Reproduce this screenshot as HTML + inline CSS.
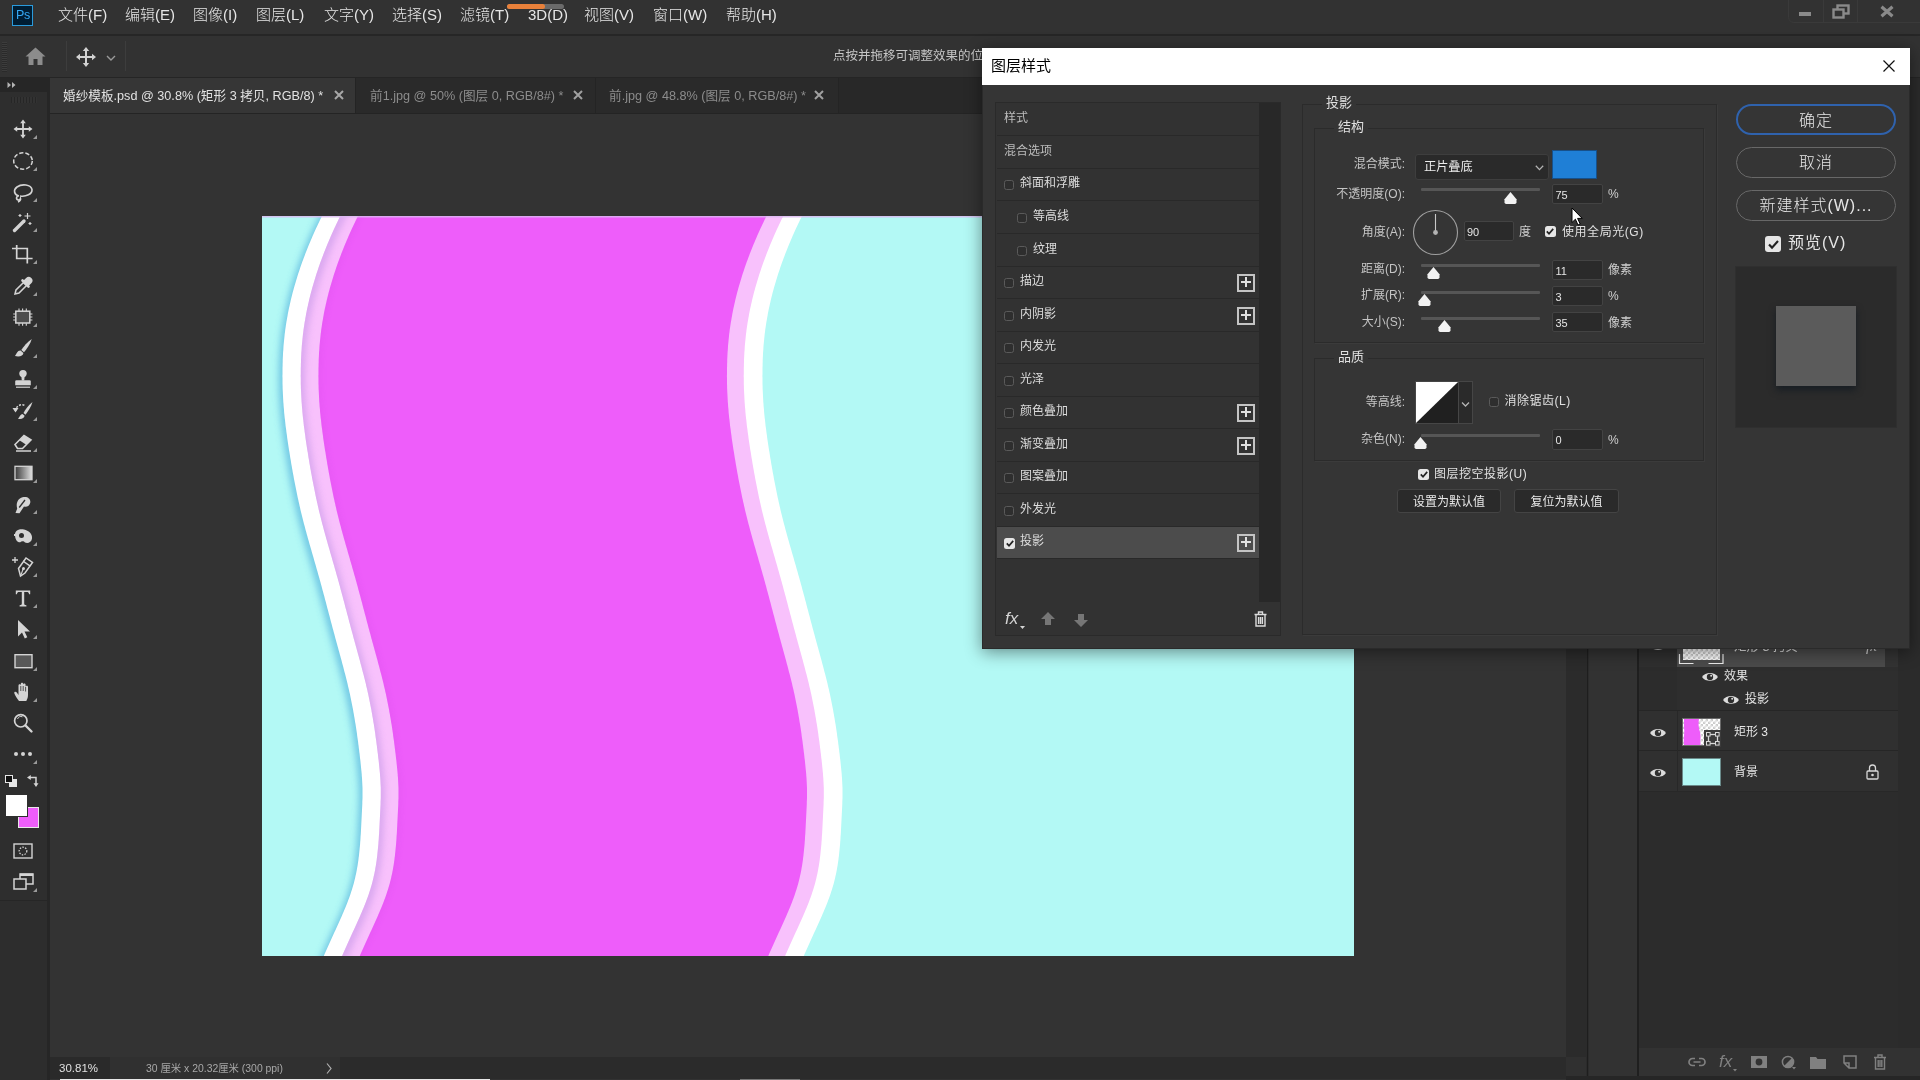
<!DOCTYPE html><html lang="zh"><head><meta charset="utf-8"><title>Photoshop</title><style>
*{box-sizing:border-box;margin:0;padding:0}
html,body{width:1920px;height:1080px;overflow:hidden;background:#323232}
body{font-family:"Liberation Sans","Noto Sans CJK SC",sans-serif;color:#d6d6d6;font-size:12px;position:relative}
.a{position:absolute}
.t{position:absolute;white-space:nowrap;line-height:1}
svg{position:absolute;overflow:visible}
.menu{font-size:15px;color:#e6e6e6;top:7px;font-weight:300}
.tab{font-size:12.65px;top:90px}
.row{position:absolute;left:997px;width:262px;height:32px;border-bottom:1px solid #292929}
.row .lb{position:absolute;top:7px;font-size:12px;color:#dcdcdc;line-height:14px;white-space:nowrap}
.cb{position:absolute;width:10px;height:10px;border:1px solid #5a5a5a;border-radius:2.5px;background:#2e2e2e}
.cbon{position:absolute;width:11px;height:11px;border-radius:2.5px;background:#e6e6e6}
.plus{position:absolute;left:240px;top:7px;width:18px;height:18px;border:2px solid #c4c4c4}
.plus:before{content:"";position:absolute;left:2px;top:5px;width:10px;height:2px;background:#e0e0e0}
.plus:after{content:"";position:absolute;left:6px;top:1px;width:2px;height:10px;background:#e0e0e0}
.lab{position:absolute;font-size:12px;color:#c4c4c4;white-space:nowrap;line-height:14px;text-align:right}
.inp{position:absolute;background:#2a2a2a;border:1px solid #434343;border-radius:2px;color:#e6e6e6;font-size:11px;line-height:20px;padding-left:2.5px}
.trk{position:absolute;height:3px;background:#565656;border-radius:1px}
.grp{position:absolute;border:1px solid #2b2b2b;box-shadow:1px 1px 0 rgba(255,255,255,.03)}
.gt{position:absolute;background:#353535;padding:0 4px;font-size:13px;color:#e0e0e0;line-height:14px;white-space:nowrap}
.btn{position:absolute;border-radius:16px;border:1.5px solid #686868;color:#e6e6e6;font-size:16px;font-weight:300;text-align:center;line-height:30px;letter-spacing:1px}
.sbtn{position:absolute;background:#2a2a2a;border:1px solid #444;border-radius:3px;color:#e8e8e8;font-size:12px;text-align:center;line-height:24px;white-space:nowrap}
</style></head><body><div id="app" style="position:absolute;left:0;top:0;width:1920px;height:1080px;will-change:transform">
<div class="a" style="left:0;top:0;width:1920px;height:34px;background:#323232"></div>
<div class="a" style="left:0;top:34px;width:1920px;height:2px;background:#262626"></div>
<div class="a" style="left:0;top:36px;width:1920px;height:41px;background:#323232"></div>
<div class="a" style="left:0;top:77px;width:1920px;height:1px;background:#252525"></div>
<div class="a" style="left:48px;top:78px;width:1518px;height:36px;background:#282828"></div>
<div class="a" style="left:50px;top:78px;width:788px;height:35px;background:#2a2a2a"></div>
<div class="a" style="left:50px;top:78px;width:305px;height:35px;background:#363636"></div>
<div class="a" style="left:48px;top:113px;width:1518px;height:1px;background:#242424"></div>
<div class="a" style="left:355px;top:78px;width:1px;height:35px;background:#242424"></div>
<div class="a" style="left:595px;top:78px;width:1px;height:35px;background:#242424"></div>
<div class="a" style="left:838px;top:78px;width:1px;height:35px;background:#242424"></div>
<div class="a" style="left:50px;top:114px;width:1516px;height:943px;background:#333333"></div>
<div class="a" style="left:0;top:78px;width:47px;height:1002px;background:#2e2e2e"></div>
<div class="a" style="left:0;top:78px;width:47px;height:14px;background:#262626"></div>
<div class="a" style="left:47px;top:78px;width:3px;height:1002px;background:#262626"></div>
<div class="a" style="left:0;top:900px;width:47px;height:1px;background:#262626"></div>
<div class="a" style="left:0;top:901px;width:47px;height:179px;background:#2d2d2d"></div>
<div class="a" style="left:12px;top:5px;width:21px;height:21px;background:#001d33;border:1.5px solid #2a9bdc"></div>
<div class="t" style="left:16px;top:9px;font-size:12.5px;color:#35a8f5;letter-spacing:-.3px">Ps</div>
<div class="t menu" style="left:58px">文件(F)</div>
<div class="t menu" style="left:125px">编辑(E)</div>
<div class="t menu" style="left:193px">图像(I)</div>
<div class="t menu" style="left:256px">图层(L)</div>
<div class="t menu" style="left:324px">文字(Y)</div>
<div class="t menu" style="left:392px">选择(S)</div>
<div class="t menu" style="left:460px">滤镜(T)</div>
<div class="t menu" style="left:528px">3D(D)</div>
<div class="t menu" style="left:584px">视图(V)</div>
<div class="t menu" style="left:653px">窗口(W)</div>
<div class="t menu" style="left:726px">帮助(H)</div>
<div class="a" style="left:507px;top:4px;width:57px;height:5px;border-radius:3px;background:#6a6a6a"></div>
<div class="a" style="left:507px;top:4px;width:38px;height:5px;border-radius:3px;background:#e8803a"></div>
<div class="a" style="left:1788px;top:-6px;width:140px;height:29px;border:1px solid #3a3a3a;border-radius:6px;background:#323232"></div>
<div class="a" style="left:1823px;top:0;width:1px;height:22px;background:#3a3a3a"></div>
<div class="a" style="left:1857px;top:0;width:1px;height:22px;background:#3a3a3a"></div>
<div class="a" style="left:1799px;top:12px;width:12px;height:4px;background:#8a8a8a"></div>
<svg style="left:1832px;top:4px" width="20" height="16" viewBox="0 0 20 16"><rect x="5.5" y="1.5" width="11" height="8" fill="none" stroke="#8a8a8a" stroke-width="2.4"/><rect x="1.5" y="5.5" width="10" height="8" fill="#323232" stroke="#8a8a8a" stroke-width="2.4"/></svg>
<svg style="left:1880px;top:5px" width="14" height="13" viewBox="0 0 14 13"><path d="M1.5 1.8 L12.5 11.2 M12.5 1.8 L1.5 11.2" stroke="#8a8a8a" stroke-width="3.2" fill="none"/></svg>
<div class="a" style="left:2px;top:42px;width:5px;height:30px;background:repeating-linear-gradient(#3c3c3c 0 1px,#2a2a2a 1px 2px)"></div>
<svg style="left:25px;top:47px" width="21" height="19" viewBox="0 0 21 19"><path d="M10.5 0.5 L20.5 9.5 H17.5 V18 H12.5 V12 H8.5 V18 H3.5 V9.5 H0.5 Z" fill="#8c8c8c"/></svg>
<div class="a" style="left:66px;top:41px;width:1px;height:30px;background:#3d3d3d"></div>
<svg style="left:76px;top:47px" width="20" height="20" viewBox="0 0 20 20"><path d="M10 0 L13.2 4 H11 V9 H16 V6.8 L20 10 L16 13.2 V11 H11 V16 H13.2 L10 20 L6.8 16 H9 V11 H4 V13.2 L0 10 L4 6.8 V9 H9 V4 H6.8 Z" fill="#d2d2d2"/></svg>
<svg style="left:106px;top:55px" width="10" height="6" viewBox="0 0 10 6"><path d="M1 1 L5 5 L9 1" stroke="#9a9a9a" stroke-width="1.4" fill="none"/></svg>
<div class="a" style="left:125px;top:41px;width:1px;height:30px;background:#3d3d3d"></div>
<div class="t" style="left:833px;top:50px;font-size:12.5px;color:#c6c6c6">点按并拖移可调整效果的位置。</div>
<div class="t tab" style="left:63px;color:#e2e2e2">婚纱模板.psd @ 30.8% (矩形 3 拷贝, RGB/8) *</div>
<div class="t tab" style="left:370px;color:#8c8c8c">前1.jpg @ 50% (图层 0, RGB/8#) *</div>
<div class="t tab" style="left:609px;color:#8c8c8c">前.jpg @ 48.8% (图层 0, RGB/8#) *</div>
<svg style="left:334px;top:90px" width="10" height="10" viewBox="0 0 10 10"><path d="M1 1 L9 9 M9 1 L1 9" stroke="#a8a8a8" stroke-width="2" fill="none"/></svg>
<svg style="left:573px;top:90px" width="10" height="10" viewBox="0 0 10 10"><path d="M1 1 L9 9 M9 1 L1 9" stroke="#a0a0a0" stroke-width="2" fill="none"/></svg>
<svg style="left:814px;top:90px" width="10" height="10" viewBox="0 0 10 10"><path d="M1 1 L9 9 M9 1 L1 9" stroke="#a0a0a0" stroke-width="2" fill="none"/></svg>
<svg style="left:7px;top:82px" width="9" height="6" viewBox="0 0 9 6"><path d="M0.5 0 L4 3 L0.5 6 Z M5 0 L8.5 3 L5 6 Z" fill="#b4b4b4"/></svg>
<div class="a" style="left:11px;top:97px;width:26px;height:6px;background:repeating-linear-gradient(90deg,#262626 0 1px,#323232 1px 3px)"></div>
<svg style="left:262px;top:216px;overflow:hidden" width="1092" height="740" viewBox="262 216 1092 740">
<defs>
<filter id="b1" x="-20%" y="-5%" width="140%" height="110%"><feGaussianBlur stdDeviation="3.6"/></filter>
<filter id="b2" x="-20%" y="-5%" width="140%" height="110%"><feGaussianBlur stdDeviation="3.2"/></filter>
<clipPath id="cpP"><path d="M350.8 196 L349.7 198 L348.6 200 L347.5 202 L346.5 204 L345.4 206 L344.4 208 L343.3 210 L342.3 212 L341.3 214 L340.3 216 L339.3 218 L338.3 220 L337.4 222 L336.4 224 L335.5 226 L334.5 228 L333.6 230 L332.7 232 L331.8 234 L330.9 236 L330.1 238 L329.2 240 L328.4 242 L327.5 244 L326.7 246 L325.9 248 L325.1 250 L324.3 252 L323.5 254 L322.8 256 L322.0 258 L321.3 260 L320.5 262 L319.8 264 L319.1 266 L318.4 268 L317.8 270 L317.1 272 L316.4 274 L315.8 276 L315.2 278 L314.6 280 L314.0 282 L313.4 284 L312.8 286 L312.2 288 L311.7 290 L311.1 292 L310.6 294 L310.1 296 L309.6 298 L309.1 300 L308.7 302 L308.2 304 L307.8 306 L307.3 308 L306.9 310 L306.5 312 L306.1 314 L305.8 316 L305.4 318 L305.1 320 L304.7 322 L304.4 324 L304.1 326 L303.8 328 L303.5 330 L303.3 332 L303.0 334 L302.8 336 L302.6 338 L302.4 340 L302.2 342 L302.0 344 L301.8 346 L301.7 348 L301.6 350 L301.4 352 L301.3 354 L301.2 356 L301.1 358 L301.0 360 L301.0 362 L300.9 364 L300.9 366 L300.8 368 L300.8 370 L300.8 372 L300.8 374 L300.7 376 L300.8 378 L300.8 380 L300.8 382 L300.8 384 L300.9 386 L300.9 388 L301.0 390 L301.1 392 L301.2 394 L301.3 396 L301.4 398 L301.5 400 L301.6 402 L301.8 404 L301.9 406 L302.1 408 L302.3 410 L302.4 412 L302.6 414 L302.8 416 L303.0 418 L303.3 420 L303.5 422 L303.7 424 L303.9 426 L304.2 428 L304.5 430 L304.7 432 L305.0 434 L305.3 436 L305.5 438 L305.8 440 L306.1 442 L306.4 444 L306.7 446 L307.0 448 L307.3 450 L307.7 452 L308.0 454 L308.3 456 L308.6 458 L309.0 460 L309.3 462 L309.6 464 L310.0 466 L310.3 468 L310.7 470 L311.0 472 L311.4 474 L311.8 476 L312.1 478 L312.5 480 L312.9 482 L313.3 484 L313.7 486 L314.1 488 L314.5 490 L314.9 492 L315.3 494 L315.7 496 L316.1 498 L316.6 500 L317.0 502 L317.5 504 L317.9 506 L318.4 508 L318.8 510 L319.3 512 L319.8 514 L320.3 516 L320.8 518 L321.3 520 L321.8 522 L322.3 524 L322.9 526 L323.4 528 L323.9 530 L324.5 532 L325.0 534 L325.6 536 L326.1 538 L326.7 540 L327.3 542 L327.8 544 L328.4 546 L329.0 548 L329.6 550 L330.1 552 L330.7 554 L331.3 556 L331.9 558 L332.4 560 L333.0 562 L333.6 564 L334.2 566 L334.7 568 L335.3 570 L335.9 572 L336.4 574 L337.0 576 L337.6 578 L338.1 580 L338.7 582 L339.2 584 L339.8 586 L340.3 588 L340.8 590 L341.4 592 L341.9 594 L342.5 596 L343.0 598 L343.5 600 L344.1 602 L344.6 604 L345.1 606 L345.6 608 L346.2 610 L346.7 612 L347.2 614 L347.8 616 L348.3 618 L348.8 620 L349.3 622 L349.9 624 L350.4 626 L350.9 628 L351.5 630 L352.0 632 L352.6 634 L353.1 636 L353.6 638 L354.2 640 L354.7 642 L355.3 644 L355.8 646 L356.4 648 L356.9 650 L357.5 652 L358.0 654 L358.6 656 L359.1 658 L359.7 660 L360.2 662 L360.7 664 L361.3 666 L361.8 668 L362.3 670 L362.8 672 L363.4 674 L363.9 676 L364.4 678 L364.9 680 L365.4 682 L365.9 684 L366.3 686 L366.8 688 L367.3 690 L367.7 692 L368.2 694 L368.6 696 L369.0 698 L369.4 700 L369.8 702 L370.2 704 L370.6 706 L371.0 708 L371.4 710 L371.7 712 L372.1 714 L372.4 716 L372.8 718 L373.1 720 L373.4 722 L373.8 724 L374.1 726 L374.4 728 L374.7 730 L375.0 732 L375.3 734 L375.5 736 L375.8 738 L376.1 740 L376.4 742 L376.6 744 L376.9 746 L377.1 748 L377.4 750 L377.6 752 L377.9 754 L378.1 756 L378.3 758 L378.6 760 L378.8 762 L379.0 764 L379.2 766 L379.4 768 L379.6 770 L379.8 772 L380.0 774 L380.1 776 L380.3 778 L380.4 780 L380.5 782 L380.6 784 L380.7 786 L380.8 788 L380.8 790 L380.8 792 L380.8 794 L380.8 796 L380.8 798 L380.7 800 L380.6 802 L380.6 804 L380.5 806 L380.4 808 L380.3 810 L380.2 812 L380.1 814 L380.0 816 L379.9 818 L379.8 820 L379.7 822 L379.6 824 L379.5 826 L379.4 828 L379.3 830 L379.2 832 L379.1 834 L378.9 836 L378.8 838 L378.7 840 L378.5 842 L378.4 844 L378.2 846 L378.0 848 L377.8 850 L377.6 852 L377.4 854 L377.2 856 L376.9 858 L376.7 860 L376.4 862 L376.1 864 L375.8 866 L375.4 868 L375.1 870 L374.7 872 L374.3 874 L373.8 876 L373.4 878 L372.9 880 L372.4 882 L371.9 884 L371.3 886 L370.7 888 L370.1 890 L369.4 892 L368.8 894 L368.1 896 L367.4 898 L366.6 900 L365.9 902 L365.1 904 L364.3 906 L363.5 908 L362.6 910 L361.8 912 L360.9 914 L360.1 916 L359.2 918 L358.3 920 L357.4 922 L356.5 924 L355.6 926 L354.7 928 L353.8 930 L352.8 932 L351.9 934 L351.0 936 L350.1 938 L349.2 940 L348.3 942 L347.4 944 L346.5 946 L345.6 948 L344.7 950 L343.8 952 L342.9 954 L342.1 956 L341.3 958 L340.4 960 L339.6 962 L338.9 964 L338.1 966 L337.4 968 L336.6 970 L335.9 972 L335.3 974 L334.6 976 L334.0 978 L777.0 978 L777.6 976 L778.3 974 L778.9 972 L779.6 970 L780.4 968 L781.1 966 L781.9 964 L782.6 962 L783.4 960 L784.3 958 L785.1 956 L785.9 954 L786.8 952 L787.7 950 L788.6 948 L789.5 946 L790.4 944 L791.3 942 L792.2 940 L793.1 938 L794.0 936 L794.9 934 L795.8 932 L796.8 930 L797.7 928 L798.6 926 L799.5 924 L800.4 922 L801.3 920 L802.2 918 L803.1 916 L803.9 914 L804.8 912 L805.6 910 L806.5 908 L807.3 906 L808.1 904 L808.9 902 L809.6 900 L810.4 898 L811.1 896 L811.8 894 L812.4 892 L813.1 890 L813.7 888 L814.3 886 L814.9 884 L815.4 882 L815.9 880 L816.4 878 L816.8 876 L817.3 874 L817.7 872 L818.1 870 L818.4 868 L818.8 866 L819.1 864 L819.4 862 L819.7 860 L819.9 858 L820.2 856 L820.4 854 L820.6 852 L820.8 850 L821.0 848 L821.2 846 L821.4 844 L821.5 842 L821.7 840 L821.8 838 L821.9 836 L822.1 834 L822.2 832 L822.3 830 L822.4 828 L822.5 826 L822.6 824 L822.7 822 L822.8 820 L822.9 818 L823.0 816 L823.1 814 L823.2 812 L823.3 810 L823.4 808 L823.5 806 L823.6 804 L823.6 802 L823.7 800 L823.8 798 L823.8 796 L823.8 794 L823.8 792 L823.8 790 L823.8 788 L823.7 786 L823.6 784 L823.5 782 L823.4 780 L823.3 778 L823.1 776 L823.0 774 L822.8 772 L822.6 770 L822.4 768 L822.2 766 L822.0 764 L821.8 762 L821.6 760 L821.3 758 L821.1 756 L820.9 754 L820.6 752 L820.4 750 L820.1 748 L819.9 746 L819.6 744 L819.4 742 L819.1 740 L818.8 738 L818.5 736 L818.3 734 L818.0 732 L817.7 730 L817.4 728 L817.1 726 L816.8 724 L816.4 722 L816.1 720 L815.8 718 L815.4 716 L815.1 714 L814.7 712 L814.4 710 L814.0 708 L813.6 706 L813.2 704 L812.8 702 L812.4 700 L812.0 698 L811.6 696 L811.2 694 L810.7 692 L810.3 690 L809.8 688 L809.3 686 L808.9 684 L808.4 682 L807.9 680 L807.4 678 L806.9 676 L806.4 674 L805.8 672 L805.3 670 L804.8 668 L804.3 666 L803.7 664 L803.2 662 L802.7 660 L802.1 658 L801.6 656 L801.0 654 L800.5 652 L799.9 650 L799.4 648 L798.8 646 L798.3 644 L797.7 642 L797.2 640 L796.6 638 L796.1 636 L795.6 634 L795.0 632 L794.5 630 L793.9 628 L793.4 626 L792.9 624 L792.3 622 L791.8 620 L791.3 618 L790.8 616 L790.2 614 L789.7 612 L789.2 610 L788.6 608 L788.1 606 L787.6 604 L787.1 602 L786.5 600 L786.0 598 L785.5 596 L784.9 594 L784.4 592 L783.8 590 L783.3 588 L782.8 586 L782.2 584 L781.7 582 L781.1 580 L780.6 578 L780.0 576 L779.4 574 L778.9 572 L778.3 570 L777.7 568 L777.2 566 L776.6 564 L776.0 562 L775.4 560 L774.9 558 L774.3 556 L773.7 554 L773.1 552 L772.6 550 L772.0 548 L771.4 546 L770.8 544 L770.3 542 L769.7 540 L769.1 538 L768.6 536 L768.0 534 L767.5 532 L766.9 530 L766.4 528 L765.9 526 L765.3 524 L764.8 522 L764.3 520 L763.8 518 L763.3 516 L762.8 514 L762.3 512 L761.8 510 L761.4 508 L760.9 506 L760.5 504 L760.0 502 L759.6 500 L759.1 498 L758.7 496 L758.3 494 L757.9 492 L757.5 490 L757.1 488 L756.7 486 L756.3 484 L755.9 482 L755.5 480 L755.1 478 L754.8 476 L754.4 474 L754.0 472 L753.7 470 L753.3 468 L753.0 466 L752.6 464 L752.3 462 L752.0 460 L751.6 458 L751.3 456 L751.0 454 L750.7 452 L750.3 450 L750.0 448 L749.7 446 L749.4 444 L749.1 442 L748.8 440 L748.5 438 L748.3 436 L748.0 434 L747.7 432 L747.5 430 L747.2 428 L746.9 426 L746.7 424 L746.5 422 L746.3 420 L746.0 418 L745.8 416 L745.6 414 L745.4 412 L745.3 410 L745.1 408 L744.9 406 L744.8 404 L744.6 402 L744.5 400 L744.4 398 L744.3 396 L744.2 394 L744.1 392 L744.0 390 L743.9 388 L743.9 386 L743.8 384 L743.8 382 L743.8 380 L743.8 378 L743.7 376 L743.8 374 L743.8 372 L743.8 370 L743.8 368 L743.9 366 L743.9 364 L744.0 362 L744.0 360 L744.1 358 L744.2 356 L744.3 354 L744.4 352 L744.6 350 L744.7 348 L744.8 346 L745.0 344 L745.2 342 L745.4 340 L745.6 338 L745.8 336 L746.0 334 L746.3 332 L746.5 330 L746.8 328 L747.1 326 L747.4 324 L747.7 322 L748.1 320 L748.4 318 L748.8 316 L749.1 314 L749.5 312 L749.9 310 L750.3 308 L750.8 306 L751.2 304 L751.7 302 L752.1 300 L752.6 298 L753.1 296 L753.6 294 L754.1 292 L754.7 290 L755.2 288 L755.8 286 L756.4 284 L757.0 282 L757.6 280 L758.2 278 L758.8 276 L759.4 274 L760.1 272 L760.8 270 L761.4 268 L762.1 266 L762.8 264 L763.5 262 L764.3 260 L765.0 258 L765.8 256 L766.5 254 L767.3 252 L768.1 250 L768.9 248 L769.7 246 L770.5 244 L771.4 242 L772.2 240 L773.1 238 L773.9 236 L774.8 234 L775.7 232 L776.6 230 L777.5 228 L778.5 226 L779.4 224 L780.4 222 L781.3 220 L782.3 218 L783.3 216 L784.3 214 L785.3 212 L786.3 210 L787.4 208 L788.4 206 L789.5 204 L790.5 202 L791.6 200 L792.7 198 L793.8 196Z"/></clipPath>
<clipPath id="cpM"><path d="M368.5 196 L367.4 198 L366.3 200 L365.2 202 L364.2 204 L363.1 206 L362.1 208 L361.0 210 L360.0 212 L359.0 214 L358.0 216 L357.0 218 L356.0 220 L355.1 222 L354.1 224 L353.2 226 L352.2 228 L351.3 230 L350.4 232 L349.5 234 L348.6 236 L347.8 238 L346.9 240 L346.1 242 L345.2 244 L344.4 246 L343.6 248 L342.8 250 L342.0 252 L341.2 254 L340.5 256 L339.7 258 L339.0 260 L338.2 262 L337.5 264 L336.8 266 L336.1 268 L335.5 270 L334.8 272 L334.1 274 L333.5 276 L332.9 278 L332.3 280 L331.7 282 L331.1 284 L330.5 286 L329.9 288 L329.4 290 L328.8 292 L328.3 294 L327.8 296 L327.3 298 L326.8 300 L326.4 302 L325.9 304 L325.5 306 L325.0 308 L324.6 310 L324.2 312 L323.8 314 L323.5 316 L323.1 318 L322.8 320 L322.4 322 L322.1 324 L321.8 326 L321.5 328 L321.2 330 L321.0 332 L320.7 334 L320.5 336 L320.3 338 L320.1 340 L319.9 342 L319.7 344 L319.5 346 L319.4 348 L319.3 350 L319.1 352 L319.0 354 L318.9 356 L318.8 358 L318.7 360 L318.7 362 L318.6 364 L318.6 366 L318.5 368 L318.5 370 L318.5 372 L318.5 374 L318.4 376 L318.5 378 L318.5 380 L318.5 382 L318.5 384 L318.6 386 L318.6 388 L318.7 390 L318.8 392 L318.9 394 L319.0 396 L319.1 398 L319.2 400 L319.3 402 L319.5 404 L319.6 406 L319.8 408 L320.0 410 L320.1 412 L320.3 414 L320.5 416 L320.7 418 L321.0 420 L321.2 422 L321.4 424 L321.6 426 L321.9 428 L322.2 430 L322.4 432 L322.7 434 L323.0 436 L323.2 438 L323.5 440 L323.8 442 L324.1 444 L324.4 446 L324.7 448 L325.0 450 L325.4 452 L325.7 454 L326.0 456 L326.3 458 L326.7 460 L327.0 462 L327.3 464 L327.7 466 L328.0 468 L328.4 470 L328.7 472 L329.1 474 L329.5 476 L329.8 478 L330.2 480 L330.6 482 L331.0 484 L331.4 486 L331.8 488 L332.2 490 L332.6 492 L333.0 494 L333.4 496 L333.8 498 L334.3 500 L334.7 502 L335.2 504 L335.6 506 L336.1 508 L336.5 510 L337.0 512 L337.5 514 L338.0 516 L338.5 518 L339.0 520 L339.5 522 L340.0 524 L340.6 526 L341.1 528 L341.6 530 L342.2 532 L342.7 534 L343.3 536 L343.8 538 L344.4 540 L345.0 542 L345.5 544 L346.1 546 L346.7 548 L347.3 550 L347.8 552 L348.4 554 L349.0 556 L349.6 558 L350.1 560 L350.7 562 L351.3 564 L351.9 566 L352.4 568 L353.0 570 L353.6 572 L354.1 574 L354.7 576 L355.3 578 L355.8 580 L356.4 582 L356.9 584 L357.5 586 L358.0 588 L358.5 590 L359.1 592 L359.6 594 L360.2 596 L360.7 598 L361.2 600 L361.8 602 L362.3 604 L362.8 606 L363.3 608 L363.9 610 L364.4 612 L364.9 614 L365.5 616 L366.0 618 L366.5 620 L367.0 622 L367.6 624 L368.1 626 L368.6 628 L369.2 630 L369.7 632 L370.3 634 L370.8 636 L371.3 638 L371.9 640 L372.4 642 L373.0 644 L373.5 646 L374.1 648 L374.6 650 L375.2 652 L375.7 654 L376.3 656 L376.8 658 L377.4 660 L377.9 662 L378.4 664 L379.0 666 L379.5 668 L380.0 670 L380.5 672 L381.1 674 L381.6 676 L382.1 678 L382.6 680 L383.1 682 L383.6 684 L384.0 686 L384.5 688 L385.0 690 L385.4 692 L385.9 694 L386.3 696 L386.7 698 L387.1 700 L387.5 702 L387.9 704 L388.3 706 L388.7 708 L389.1 710 L389.4 712 L389.8 714 L390.1 716 L390.5 718 L390.8 720 L391.1 722 L391.5 724 L391.8 726 L392.1 728 L392.4 730 L392.7 732 L393.0 734 L393.2 736 L393.5 738 L393.8 740 L394.1 742 L394.3 744 L394.6 746 L394.8 748 L395.1 750 L395.3 752 L395.6 754 L395.8 756 L396.0 758 L396.3 760 L396.5 762 L396.7 764 L396.9 766 L397.1 768 L397.3 770 L397.5 772 L397.7 774 L397.8 776 L398.0 778 L398.1 780 L398.2 782 L398.3 784 L398.4 786 L398.5 788 L398.5 790 L398.5 792 L398.5 794 L398.5 796 L398.5 798 L398.4 800 L398.3 802 L398.3 804 L398.2 806 L398.1 808 L398.0 810 L397.9 812 L397.8 814 L397.7 816 L397.6 818 L397.5 820 L397.4 822 L397.3 824 L397.2 826 L397.1 828 L397.0 830 L396.9 832 L396.8 834 L396.6 836 L396.5 838 L396.4 840 L396.2 842 L396.1 844 L395.9 846 L395.7 848 L395.5 850 L395.3 852 L395.1 854 L394.9 856 L394.6 858 L394.4 860 L394.1 862 L393.8 864 L393.5 866 L393.1 868 L392.8 870 L392.4 872 L392.0 874 L391.5 876 L391.1 878 L390.6 880 L390.1 882 L389.6 884 L389.0 886 L388.4 888 L387.8 890 L387.1 892 L386.5 894 L385.8 896 L385.1 898 L384.3 900 L383.6 902 L382.8 904 L382.0 906 L381.2 908 L380.3 910 L379.5 912 L378.6 914 L377.8 916 L376.9 918 L376.0 920 L375.1 922 L374.2 924 L373.3 926 L372.4 928 L371.5 930 L370.5 932 L369.6 934 L368.7 936 L367.8 938 L366.9 940 L366.0 942 L365.1 944 L364.2 946 L363.3 948 L362.4 950 L361.5 952 L360.6 954 L359.8 956 L359.0 958 L358.1 960 L357.3 962 L356.6 964 L355.8 966 L355.1 968 L354.3 970 L353.6 972 L353.0 974 L352.3 976 L351.7 978 L760.2 978 L760.8 976 L761.5 974 L762.1 972 L762.8 970 L763.6 968 L764.3 966 L765.1 964 L765.8 962 L766.6 960 L767.5 958 L768.3 956 L769.1 954 L770.0 952 L770.9 950 L771.8 948 L772.7 946 L773.6 944 L774.5 942 L775.4 940 L776.3 938 L777.2 936 L778.1 934 L779.0 932 L780.0 930 L780.9 928 L781.8 926 L782.7 924 L783.6 922 L784.5 920 L785.4 918 L786.3 916 L787.1 914 L788.0 912 L788.8 910 L789.7 908 L790.5 906 L791.3 904 L792.1 902 L792.8 900 L793.6 898 L794.3 896 L795.0 894 L795.6 892 L796.3 890 L796.9 888 L797.5 886 L798.1 884 L798.6 882 L799.1 880 L799.6 878 L800.0 876 L800.5 874 L800.9 872 L801.3 870 L801.6 868 L802.0 866 L802.3 864 L802.6 862 L802.9 860 L803.1 858 L803.4 856 L803.6 854 L803.8 852 L804.0 850 L804.2 848 L804.4 846 L804.6 844 L804.7 842 L804.9 840 L805.0 838 L805.1 836 L805.3 834 L805.4 832 L805.5 830 L805.6 828 L805.7 826 L805.8 824 L805.9 822 L806.0 820 L806.1 818 L806.2 816 L806.3 814 L806.4 812 L806.5 810 L806.6 808 L806.7 806 L806.8 804 L806.8 802 L806.9 800 L807.0 798 L807.0 796 L807.0 794 L807.0 792 L807.0 790 L807.0 788 L806.9 786 L806.8 784 L806.7 782 L806.6 780 L806.5 778 L806.3 776 L806.2 774 L806.0 772 L805.8 770 L805.6 768 L805.4 766 L805.2 764 L805.0 762 L804.8 760 L804.5 758 L804.3 756 L804.1 754 L803.8 752 L803.6 750 L803.3 748 L803.1 746 L802.8 744 L802.6 742 L802.3 740 L802.0 738 L801.7 736 L801.5 734 L801.2 732 L800.9 730 L800.6 728 L800.3 726 L800.0 724 L799.6 722 L799.3 720 L799.0 718 L798.6 716 L798.3 714 L797.9 712 L797.6 710 L797.2 708 L796.8 706 L796.4 704 L796.0 702 L795.6 700 L795.2 698 L794.8 696 L794.4 694 L793.9 692 L793.5 690 L793.0 688 L792.5 686 L792.1 684 L791.6 682 L791.1 680 L790.6 678 L790.1 676 L789.6 674 L789.0 672 L788.5 670 L788.0 668 L787.5 666 L786.9 664 L786.4 662 L785.9 660 L785.3 658 L784.8 656 L784.2 654 L783.7 652 L783.1 650 L782.6 648 L782.0 646 L781.5 644 L780.9 642 L780.4 640 L779.8 638 L779.3 636 L778.8 634 L778.2 632 L777.7 630 L777.1 628 L776.6 626 L776.1 624 L775.5 622 L775.0 620 L774.5 618 L774.0 616 L773.4 614 L772.9 612 L772.4 610 L771.8 608 L771.3 606 L770.8 604 L770.3 602 L769.7 600 L769.2 598 L768.7 596 L768.1 594 L767.6 592 L767.0 590 L766.5 588 L766.0 586 L765.4 584 L764.9 582 L764.3 580 L763.8 578 L763.2 576 L762.6 574 L762.1 572 L761.5 570 L760.9 568 L760.4 566 L759.8 564 L759.2 562 L758.6 560 L758.1 558 L757.5 556 L756.9 554 L756.3 552 L755.8 550 L755.2 548 L754.6 546 L754.0 544 L753.5 542 L752.9 540 L752.3 538 L751.8 536 L751.2 534 L750.7 532 L750.1 530 L749.6 528 L749.1 526 L748.5 524 L748.0 522 L747.5 520 L747.0 518 L746.5 516 L746.0 514 L745.5 512 L745.0 510 L744.6 508 L744.1 506 L743.7 504 L743.2 502 L742.8 500 L742.3 498 L741.9 496 L741.5 494 L741.1 492 L740.7 490 L740.3 488 L739.9 486 L739.5 484 L739.1 482 L738.7 480 L738.3 478 L738.0 476 L737.6 474 L737.2 472 L736.9 470 L736.5 468 L736.2 466 L735.8 464 L735.5 462 L735.2 460 L734.8 458 L734.5 456 L734.2 454 L733.9 452 L733.5 450 L733.2 448 L732.9 446 L732.6 444 L732.3 442 L732.0 440 L731.7 438 L731.5 436 L731.2 434 L730.9 432 L730.7 430 L730.4 428 L730.1 426 L729.9 424 L729.7 422 L729.5 420 L729.2 418 L729.0 416 L728.8 414 L728.6 412 L728.5 410 L728.3 408 L728.1 406 L728.0 404 L727.8 402 L727.7 400 L727.6 398 L727.5 396 L727.4 394 L727.3 392 L727.2 390 L727.1 388 L727.1 386 L727.0 384 L727.0 382 L727.0 380 L727.0 378 L726.9 376 L727.0 374 L727.0 372 L727.0 370 L727.0 368 L727.1 366 L727.1 364 L727.2 362 L727.2 360 L727.3 358 L727.4 356 L727.5 354 L727.6 352 L727.8 350 L727.9 348 L728.0 346 L728.2 344 L728.4 342 L728.6 340 L728.8 338 L729.0 336 L729.2 334 L729.5 332 L729.7 330 L730.0 328 L730.3 326 L730.6 324 L730.9 322 L731.3 320 L731.6 318 L732.0 316 L732.3 314 L732.7 312 L733.1 310 L733.5 308 L734.0 306 L734.4 304 L734.9 302 L735.3 300 L735.8 298 L736.3 296 L736.8 294 L737.3 292 L737.9 290 L738.4 288 L739.0 286 L739.6 284 L740.2 282 L740.8 280 L741.4 278 L742.0 276 L742.6 274 L743.3 272 L744.0 270 L744.6 268 L745.3 266 L746.0 264 L746.7 262 L747.5 260 L748.2 258 L749.0 256 L749.7 254 L750.5 252 L751.3 250 L752.1 248 L752.9 246 L753.7 244 L754.6 242 L755.4 240 L756.3 238 L757.1 236 L758.0 234 L758.9 232 L759.8 230 L760.7 228 L761.7 226 L762.6 224 L763.6 222 L764.5 220 L765.5 218 L766.5 216 L767.5 214 L768.5 212 L769.5 210 L770.6 208 L771.6 206 L772.7 204 L773.7 202 L774.8 200 L775.9 198 L777.0 196Z"/></clipPath>
</defs>
<rect x="262" y="216" width="1092" height="740" fill="#b3f9f5"/>
<path d="M333.5 196 L332.4 198 L331.3 200 L330.2 202 L329.2 204 L328.1 206 L327.1 208 L326.0 210 L325.0 212 L324.0 214 L323.0 216 L322.0 218 L321.0 220 L320.1 222 L319.1 224 L318.2 226 L317.2 228 L316.3 230 L315.4 232 L314.5 234 L313.6 236 L312.8 238 L311.9 240 L311.1 242 L310.2 244 L309.4 246 L308.6 248 L307.8 250 L307.0 252 L306.2 254 L305.5 256 L304.7 258 L304.0 260 L303.2 262 L302.5 264 L301.8 266 L301.1 268 L300.5 270 L299.8 272 L299.1 274 L298.5 276 L297.9 278 L297.3 280 L296.7 282 L296.1 284 L295.5 286 L294.9 288 L294.4 290 L293.8 292 L293.3 294 L292.8 296 L292.3 298 L291.8 300 L291.4 302 L290.9 304 L290.5 306 L290.0 308 L289.6 310 L289.2 312 L288.8 314 L288.5 316 L288.1 318 L287.8 320 L287.4 322 L287.1 324 L286.8 326 L286.5 328 L286.2 330 L286.0 332 L285.7 334 L285.5 336 L285.3 338 L285.1 340 L284.9 342 L284.7 344 L284.5 346 L284.4 348 L284.3 350 L284.1 352 L284.0 354 L283.9 356 L283.8 358 L283.7 360 L283.7 362 L283.6 364 L283.6 366 L283.5 368 L283.5 370 L283.5 372 L283.5 374 L283.4 376 L283.5 378 L283.5 380 L283.5 382 L283.5 384 L283.6 386 L283.6 388 L283.7 390 L283.8 392 L283.9 394 L284.0 396 L284.1 398 L284.2 400 L284.3 402 L284.5 404 L284.6 406 L284.8 408 L285.0 410 L285.1 412 L285.3 414 L285.5 416 L285.7 418 L286.0 420 L286.2 422 L286.4 424 L286.6 426 L286.9 428 L287.2 430 L287.4 432 L287.7 434 L288.0 436 L288.2 438 L288.5 440 L288.8 442 L289.1 444 L289.4 446 L289.7 448 L290.0 450 L290.4 452 L290.7 454 L291.0 456 L291.3 458 L291.7 460 L292.0 462 L292.3 464 L292.7 466 L293.0 468 L293.4 470 L293.7 472 L294.1 474 L294.5 476 L294.8 478 L295.2 480 L295.6 482 L296.0 484 L296.4 486 L296.8 488 L297.2 490 L297.6 492 L298.0 494 L298.4 496 L298.8 498 L299.3 500 L299.7 502 L300.2 504 L300.6 506 L301.1 508 L301.5 510 L302.0 512 L302.5 514 L303.0 516 L303.5 518 L304.0 520 L304.5 522 L305.0 524 L305.6 526 L306.1 528 L306.6 530 L307.2 532 L307.7 534 L308.3 536 L308.8 538 L309.4 540 L310.0 542 L310.5 544 L311.1 546 L311.7 548 L312.3 550 L312.8 552 L313.4 554 L314.0 556 L314.6 558 L315.1 560 L315.7 562 L316.3 564 L316.9 566 L317.4 568 L318.0 570 L318.6 572 L319.1 574 L319.7 576 L320.3 578 L320.8 580 L321.4 582 L321.9 584 L322.5 586 L323.0 588 L323.5 590 L324.1 592 L324.6 594 L325.2 596 L325.7 598 L326.2 600 L326.8 602 L327.3 604 L327.8 606 L328.3 608 L328.9 610 L329.4 612 L329.9 614 L330.5 616 L331.0 618 L331.5 620 L332.0 622 L332.6 624 L333.1 626 L333.6 628 L334.2 630 L334.7 632 L335.3 634 L335.8 636 L336.3 638 L336.9 640 L337.4 642 L338.0 644 L338.5 646 L339.1 648 L339.6 650 L340.2 652 L340.7 654 L341.3 656 L341.8 658 L342.4 660 L342.9 662 L343.4 664 L344.0 666 L344.5 668 L345.0 670 L345.5 672 L346.1 674 L346.6 676 L347.1 678 L347.6 680 L348.1 682 L348.6 684 L349.0 686 L349.5 688 L350.0 690 L350.4 692 L350.9 694 L351.3 696 L351.7 698 L352.1 700 L352.5 702 L352.9 704 L353.3 706 L353.7 708 L354.1 710 L354.4 712 L354.8 714 L355.1 716 L355.5 718 L355.8 720 L356.1 722 L356.5 724 L356.8 726 L357.1 728 L357.4 730 L357.7 732 L358.0 734 L358.2 736 L358.5 738 L358.8 740 L359.1 742 L359.3 744 L359.6 746 L359.8 748 L360.1 750 L360.3 752 L360.6 754 L360.8 756 L361.0 758 L361.3 760 L361.5 762 L361.7 764 L361.9 766 L362.1 768 L362.3 770 L362.5 772 L362.7 774 L362.8 776 L363.0 778 L363.1 780 L363.2 782 L363.3 784 L363.4 786 L363.5 788 L363.5 790 L363.5 792 L363.5 794 L363.5 796 L363.5 798 L363.4 800 L363.3 802 L363.3 804 L363.2 806 L363.1 808 L363.0 810 L362.9 812 L362.8 814 L362.7 816 L362.6 818 L362.5 820 L362.4 822 L362.3 824 L362.2 826 L362.1 828 L362.0 830 L361.9 832 L361.8 834 L361.6 836 L361.5 838 L361.4 840 L361.2 842 L361.1 844 L360.9 846 L360.7 848 L360.5 850 L360.3 852 L360.1 854 L359.9 856 L359.6 858 L359.4 860 L359.1 862 L358.8 864 L358.5 866 L358.1 868 L357.8 870 L357.4 872 L357.0 874 L356.5 876 L356.1 878 L355.6 880 L355.1 882 L354.6 884 L354.0 886 L353.4 888 L352.8 890 L352.1 892 L351.5 894 L350.8 896 L350.1 898 L349.3 900 L348.6 902 L347.8 904 L347.0 906 L346.2 908 L345.3 910 L344.5 912 L343.6 914 L342.8 916 L341.9 918 L341.0 920 L340.1 922 L339.2 924 L338.3 926 L337.4 928 L336.5 930 L335.5 932 L334.6 934 L333.7 936 L332.8 938 L331.9 940 L331.0 942 L330.1 944 L329.2 946 L328.3 948 L327.4 950 L326.5 952 L325.6 954 L324.8 956 L324.0 958 L323.1 960 L322.3 962 L321.6 964 L320.8 966 L320.1 968 L319.3 970 L318.6 972 L318.0 974 L317.3 976 L316.7 978" fill="none" stroke="#3fa2d8" stroke-width="9" opacity=".6" filter="url(#b1)" transform="translate(0,3)"/>
<path d="M332.5 196 L331.4 198 L330.3 200 L329.2 202 L328.2 204 L327.1 206 L326.1 208 L325.0 210 L324.0 212 L323.0 214 L322.0 216 L321.0 218 L320.0 220 L319.1 222 L318.1 224 L317.2 226 L316.2 228 L315.3 230 L314.4 232 L313.5 234 L312.6 236 L311.8 238 L310.9 240 L310.1 242 L309.2 244 L308.4 246 L307.6 248 L306.8 250 L306.0 252 L305.2 254 L304.5 256 L303.7 258 L303.0 260 L302.2 262 L301.5 264 L300.8 266 L300.1 268 L299.5 270 L298.8 272 L298.1 274 L297.5 276 L296.9 278 L296.3 280 L295.7 282 L295.1 284 L294.5 286 L293.9 288 L293.4 290 L292.8 292 L292.3 294 L291.8 296 L291.3 298 L290.8 300 L290.4 302 L289.9 304 L289.5 306 L289.0 308 L288.6 310 L288.2 312 L287.8 314 L287.5 316 L287.1 318 L286.8 320 L286.4 322 L286.1 324 L285.8 326 L285.5 328 L285.2 330 L285.0 332 L284.7 334 L284.5 336 L284.3 338 L284.1 340 L283.9 342 L283.7 344 L283.5 346 L283.4 348 L283.3 350 L283.1 352 L283.0 354 L282.9 356 L282.8 358 L282.7 360 L282.7 362 L282.6 364 L282.6 366 L282.5 368 L282.5 370 L282.5 372 L282.5 374 L282.4 376 L282.5 378 L282.5 380 L282.5 382 L282.5 384 L282.6 386 L282.6 388 L282.7 390 L282.8 392 L282.9 394 L283.0 396 L283.1 398 L283.2 400 L283.3 402 L283.5 404 L283.6 406 L283.8 408 L284.0 410 L284.1 412 L284.3 414 L284.5 416 L284.7 418 L285.0 420 L285.2 422 L285.4 424 L285.6 426 L285.9 428 L286.2 430 L286.4 432 L286.7 434 L287.0 436 L287.2 438 L287.5 440 L287.8 442 L288.1 444 L288.4 446 L288.7 448 L289.0 450 L289.4 452 L289.7 454 L290.0 456 L290.3 458 L290.7 460 L291.0 462 L291.3 464 L291.7 466 L292.0 468 L292.4 470 L292.7 472 L293.1 474 L293.5 476 L293.8 478 L294.2 480 L294.6 482 L295.0 484 L295.4 486 L295.8 488 L296.2 490 L296.6 492 L297.0 494 L297.4 496 L297.8 498 L298.3 500 L298.7 502 L299.2 504 L299.6 506 L300.1 508 L300.5 510 L301.0 512 L301.5 514 L302.0 516 L302.5 518 L303.0 520 L303.5 522 L304.0 524 L304.6 526 L305.1 528 L305.6 530 L306.2 532 L306.7 534 L307.3 536 L307.8 538 L308.4 540 L309.0 542 L309.5 544 L310.1 546 L310.7 548 L311.3 550 L311.8 552 L312.4 554 L313.0 556 L313.6 558 L314.1 560 L314.7 562 L315.3 564 L315.9 566 L316.4 568 L317.0 570 L317.6 572 L318.1 574 L318.7 576 L319.3 578 L319.8 580 L320.4 582 L320.9 584 L321.5 586 L322.0 588 L322.5 590 L323.1 592 L323.6 594 L324.2 596 L324.7 598 L325.2 600 L325.8 602 L326.3 604 L326.8 606 L327.3 608 L327.9 610 L328.4 612 L328.9 614 L329.5 616 L330.0 618 L330.5 620 L331.0 622 L331.6 624 L332.1 626 L332.6 628 L333.2 630 L333.7 632 L334.3 634 L334.8 636 L335.3 638 L335.9 640 L336.4 642 L337.0 644 L337.5 646 L338.1 648 L338.6 650 L339.2 652 L339.7 654 L340.3 656 L340.8 658 L341.4 660 L341.9 662 L342.4 664 L343.0 666 L343.5 668 L344.0 670 L344.5 672 L345.1 674 L345.6 676 L346.1 678 L346.6 680 L347.1 682 L347.6 684 L348.0 686 L348.5 688 L349.0 690 L349.4 692 L349.9 694 L350.3 696 L350.7 698 L351.1 700 L351.5 702 L351.9 704 L352.3 706 L352.7 708 L353.1 710 L353.4 712 L353.8 714 L354.1 716 L354.5 718 L354.8 720 L355.1 722 L355.5 724 L355.8 726 L356.1 728 L356.4 730 L356.7 732 L357.0 734 L357.2 736 L357.5 738 L357.8 740 L358.1 742 L358.3 744 L358.6 746 L358.8 748 L359.1 750 L359.3 752 L359.6 754 L359.8 756 L360.0 758 L360.3 760 L360.5 762 L360.7 764 L360.9 766 L361.1 768 L361.3 770 L361.5 772 L361.7 774 L361.8 776 L362.0 778 L362.1 780 L362.2 782 L362.3 784 L362.4 786 L362.5 788 L362.5 790 L362.5 792 L362.5 794 L362.5 796 L362.5 798 L362.4 800 L362.3 802 L362.3 804 L362.2 806 L362.1 808 L362.0 810 L361.9 812 L361.8 814 L361.7 816 L361.6 818 L361.5 820 L361.4 822 L361.3 824 L361.2 826 L361.1 828 L361.0 830 L360.9 832 L360.8 834 L360.6 836 L360.5 838 L360.4 840 L360.2 842 L360.1 844 L359.9 846 L359.7 848 L359.5 850 L359.3 852 L359.1 854 L358.9 856 L358.6 858 L358.4 860 L358.1 862 L357.8 864 L357.5 866 L357.1 868 L356.8 870 L356.4 872 L356.0 874 L355.5 876 L355.1 878 L354.6 880 L354.1 882 L353.6 884 L353.0 886 L352.4 888 L351.8 890 L351.1 892 L350.5 894 L349.8 896 L349.1 898 L348.3 900 L347.6 902 L346.8 904 L346.0 906 L345.2 908 L344.3 910 L343.5 912 L342.6 914 L341.8 916 L340.9 918 L340.0 920 L339.1 922 L338.2 924 L337.3 926 L336.4 928 L335.5 930 L334.5 932 L333.6 934 L332.7 936 L331.8 938 L330.9 940 L330.0 942 L329.1 944 L328.2 946 L327.3 948 L326.4 950 L325.5 952 L324.6 954 L323.8 956 L323.0 958 L322.1 960 L321.3 962 L320.6 964 L319.8 966 L319.1 968 L318.3 970 L317.6 972 L317.0 974 L316.3 976 L315.7 978 L795.7 978 L796.3 976 L797.0 974 L797.6 972 L798.3 970 L799.1 968 L799.8 966 L800.6 964 L801.3 962 L802.1 960 L803.0 958 L803.8 956 L804.6 954 L805.5 952 L806.4 950 L807.3 948 L808.2 946 L809.1 944 L810.0 942 L810.9 940 L811.8 938 L812.7 936 L813.6 934 L814.5 932 L815.5 930 L816.4 928 L817.3 926 L818.2 924 L819.1 922 L820.0 920 L820.9 918 L821.8 916 L822.6 914 L823.5 912 L824.3 910 L825.2 908 L826.0 906 L826.8 904 L827.6 902 L828.3 900 L829.1 898 L829.8 896 L830.5 894 L831.1 892 L831.8 890 L832.4 888 L833.0 886 L833.6 884 L834.1 882 L834.6 880 L835.1 878 L835.5 876 L836.0 874 L836.4 872 L836.8 870 L837.1 868 L837.5 866 L837.8 864 L838.1 862 L838.4 860 L838.6 858 L838.9 856 L839.1 854 L839.3 852 L839.5 850 L839.7 848 L839.9 846 L840.1 844 L840.2 842 L840.4 840 L840.5 838 L840.6 836 L840.8 834 L840.9 832 L841.0 830 L841.1 828 L841.2 826 L841.3 824 L841.4 822 L841.5 820 L841.6 818 L841.7 816 L841.8 814 L841.9 812 L842.0 810 L842.1 808 L842.2 806 L842.3 804 L842.3 802 L842.4 800 L842.5 798 L842.5 796 L842.5 794 L842.5 792 L842.5 790 L842.5 788 L842.4 786 L842.3 784 L842.2 782 L842.1 780 L842.0 778 L841.8 776 L841.7 774 L841.5 772 L841.3 770 L841.1 768 L840.9 766 L840.7 764 L840.5 762 L840.3 760 L840.0 758 L839.8 756 L839.6 754 L839.3 752 L839.1 750 L838.8 748 L838.6 746 L838.3 744 L838.1 742 L837.8 740 L837.5 738 L837.2 736 L837.0 734 L836.7 732 L836.4 730 L836.1 728 L835.8 726 L835.5 724 L835.1 722 L834.8 720 L834.5 718 L834.1 716 L833.8 714 L833.4 712 L833.1 710 L832.7 708 L832.3 706 L831.9 704 L831.5 702 L831.1 700 L830.7 698 L830.3 696 L829.9 694 L829.4 692 L829.0 690 L828.5 688 L828.0 686 L827.6 684 L827.1 682 L826.6 680 L826.1 678 L825.6 676 L825.1 674 L824.5 672 L824.0 670 L823.5 668 L823.0 666 L822.4 664 L821.9 662 L821.4 660 L820.8 658 L820.3 656 L819.7 654 L819.2 652 L818.6 650 L818.1 648 L817.5 646 L817.0 644 L816.4 642 L815.9 640 L815.3 638 L814.8 636 L814.3 634 L813.7 632 L813.2 630 L812.6 628 L812.1 626 L811.6 624 L811.0 622 L810.5 620 L810.0 618 L809.5 616 L808.9 614 L808.4 612 L807.9 610 L807.3 608 L806.8 606 L806.3 604 L805.8 602 L805.2 600 L804.7 598 L804.2 596 L803.6 594 L803.1 592 L802.5 590 L802.0 588 L801.5 586 L800.9 584 L800.4 582 L799.8 580 L799.3 578 L798.7 576 L798.1 574 L797.6 572 L797.0 570 L796.4 568 L795.9 566 L795.3 564 L794.7 562 L794.1 560 L793.6 558 L793.0 556 L792.4 554 L791.8 552 L791.3 550 L790.7 548 L790.1 546 L789.5 544 L789.0 542 L788.4 540 L787.8 538 L787.3 536 L786.7 534 L786.2 532 L785.6 530 L785.1 528 L784.6 526 L784.0 524 L783.5 522 L783.0 520 L782.5 518 L782.0 516 L781.5 514 L781.0 512 L780.5 510 L780.1 508 L779.6 506 L779.2 504 L778.7 502 L778.3 500 L777.8 498 L777.4 496 L777.0 494 L776.6 492 L776.2 490 L775.8 488 L775.4 486 L775.0 484 L774.6 482 L774.2 480 L773.8 478 L773.5 476 L773.1 474 L772.7 472 L772.4 470 L772.0 468 L771.7 466 L771.3 464 L771.0 462 L770.7 460 L770.3 458 L770.0 456 L769.7 454 L769.4 452 L769.0 450 L768.7 448 L768.4 446 L768.1 444 L767.8 442 L767.5 440 L767.2 438 L767.0 436 L766.7 434 L766.4 432 L766.2 430 L765.9 428 L765.6 426 L765.4 424 L765.2 422 L765.0 420 L764.7 418 L764.5 416 L764.3 414 L764.1 412 L764.0 410 L763.8 408 L763.6 406 L763.5 404 L763.3 402 L763.2 400 L763.1 398 L763.0 396 L762.9 394 L762.8 392 L762.7 390 L762.6 388 L762.6 386 L762.5 384 L762.5 382 L762.5 380 L762.5 378 L762.4 376 L762.5 374 L762.5 372 L762.5 370 L762.5 368 L762.6 366 L762.6 364 L762.7 362 L762.7 360 L762.8 358 L762.9 356 L763.0 354 L763.1 352 L763.3 350 L763.4 348 L763.5 346 L763.7 344 L763.9 342 L764.1 340 L764.3 338 L764.5 336 L764.7 334 L765.0 332 L765.2 330 L765.5 328 L765.8 326 L766.1 324 L766.4 322 L766.8 320 L767.1 318 L767.5 316 L767.8 314 L768.2 312 L768.6 310 L769.0 308 L769.5 306 L769.9 304 L770.4 302 L770.8 300 L771.3 298 L771.8 296 L772.3 294 L772.8 292 L773.4 290 L773.9 288 L774.5 286 L775.1 284 L775.7 282 L776.3 280 L776.9 278 L777.5 276 L778.1 274 L778.8 272 L779.5 270 L780.1 268 L780.8 266 L781.5 264 L782.2 262 L783.0 260 L783.7 258 L784.5 256 L785.2 254 L786.0 252 L786.8 250 L787.6 248 L788.4 246 L789.2 244 L790.1 242 L790.9 240 L791.8 238 L792.6 236 L793.5 234 L794.4 232 L795.3 230 L796.2 228 L797.2 226 L798.1 224 L799.1 222 L800.0 220 L801.0 218 L802.0 216 L803.0 214 L804.0 212 L805.0 210 L806.1 208 L807.1 206 L808.2 204 L809.2 202 L810.3 200 L811.4 198 L812.5 196Z" fill="#ffffff"/>
<path d="M350.8 196 L349.7 198 L348.6 200 L347.5 202 L346.5 204 L345.4 206 L344.4 208 L343.3 210 L342.3 212 L341.3 214 L340.3 216 L339.3 218 L338.3 220 L337.4 222 L336.4 224 L335.5 226 L334.5 228 L333.6 230 L332.7 232 L331.8 234 L330.9 236 L330.1 238 L329.2 240 L328.4 242 L327.5 244 L326.7 246 L325.9 248 L325.1 250 L324.3 252 L323.5 254 L322.8 256 L322.0 258 L321.3 260 L320.5 262 L319.8 264 L319.1 266 L318.4 268 L317.8 270 L317.1 272 L316.4 274 L315.8 276 L315.2 278 L314.6 280 L314.0 282 L313.4 284 L312.8 286 L312.2 288 L311.7 290 L311.1 292 L310.6 294 L310.1 296 L309.6 298 L309.1 300 L308.7 302 L308.2 304 L307.8 306 L307.3 308 L306.9 310 L306.5 312 L306.1 314 L305.8 316 L305.4 318 L305.1 320 L304.7 322 L304.4 324 L304.1 326 L303.8 328 L303.5 330 L303.3 332 L303.0 334 L302.8 336 L302.6 338 L302.4 340 L302.2 342 L302.0 344 L301.8 346 L301.7 348 L301.6 350 L301.4 352 L301.3 354 L301.2 356 L301.1 358 L301.0 360 L301.0 362 L300.9 364 L300.9 366 L300.8 368 L300.8 370 L300.8 372 L300.8 374 L300.7 376 L300.8 378 L300.8 380 L300.8 382 L300.8 384 L300.9 386 L300.9 388 L301.0 390 L301.1 392 L301.2 394 L301.3 396 L301.4 398 L301.5 400 L301.6 402 L301.8 404 L301.9 406 L302.1 408 L302.3 410 L302.4 412 L302.6 414 L302.8 416 L303.0 418 L303.3 420 L303.5 422 L303.7 424 L303.9 426 L304.2 428 L304.5 430 L304.7 432 L305.0 434 L305.3 436 L305.5 438 L305.8 440 L306.1 442 L306.4 444 L306.7 446 L307.0 448 L307.3 450 L307.7 452 L308.0 454 L308.3 456 L308.6 458 L309.0 460 L309.3 462 L309.6 464 L310.0 466 L310.3 468 L310.7 470 L311.0 472 L311.4 474 L311.8 476 L312.1 478 L312.5 480 L312.9 482 L313.3 484 L313.7 486 L314.1 488 L314.5 490 L314.9 492 L315.3 494 L315.7 496 L316.1 498 L316.6 500 L317.0 502 L317.5 504 L317.9 506 L318.4 508 L318.8 510 L319.3 512 L319.8 514 L320.3 516 L320.8 518 L321.3 520 L321.8 522 L322.3 524 L322.9 526 L323.4 528 L323.9 530 L324.5 532 L325.0 534 L325.6 536 L326.1 538 L326.7 540 L327.3 542 L327.8 544 L328.4 546 L329.0 548 L329.6 550 L330.1 552 L330.7 554 L331.3 556 L331.9 558 L332.4 560 L333.0 562 L333.6 564 L334.2 566 L334.7 568 L335.3 570 L335.9 572 L336.4 574 L337.0 576 L337.6 578 L338.1 580 L338.7 582 L339.2 584 L339.8 586 L340.3 588 L340.8 590 L341.4 592 L341.9 594 L342.5 596 L343.0 598 L343.5 600 L344.1 602 L344.6 604 L345.1 606 L345.6 608 L346.2 610 L346.7 612 L347.2 614 L347.8 616 L348.3 618 L348.8 620 L349.3 622 L349.9 624 L350.4 626 L350.9 628 L351.5 630 L352.0 632 L352.6 634 L353.1 636 L353.6 638 L354.2 640 L354.7 642 L355.3 644 L355.8 646 L356.4 648 L356.9 650 L357.5 652 L358.0 654 L358.6 656 L359.1 658 L359.7 660 L360.2 662 L360.7 664 L361.3 666 L361.8 668 L362.3 670 L362.8 672 L363.4 674 L363.9 676 L364.4 678 L364.9 680 L365.4 682 L365.9 684 L366.3 686 L366.8 688 L367.3 690 L367.7 692 L368.2 694 L368.6 696 L369.0 698 L369.4 700 L369.8 702 L370.2 704 L370.6 706 L371.0 708 L371.4 710 L371.7 712 L372.1 714 L372.4 716 L372.8 718 L373.1 720 L373.4 722 L373.8 724 L374.1 726 L374.4 728 L374.7 730 L375.0 732 L375.3 734 L375.5 736 L375.8 738 L376.1 740 L376.4 742 L376.6 744 L376.9 746 L377.1 748 L377.4 750 L377.6 752 L377.9 754 L378.1 756 L378.3 758 L378.6 760 L378.8 762 L379.0 764 L379.2 766 L379.4 768 L379.6 770 L379.8 772 L380.0 774 L380.1 776 L380.3 778 L380.4 780 L380.5 782 L380.6 784 L380.7 786 L380.8 788 L380.8 790 L380.8 792 L380.8 794 L380.8 796 L380.8 798 L380.7 800 L380.6 802 L380.6 804 L380.5 806 L380.4 808 L380.3 810 L380.2 812 L380.1 814 L380.0 816 L379.9 818 L379.8 820 L379.7 822 L379.6 824 L379.5 826 L379.4 828 L379.3 830 L379.2 832 L379.1 834 L378.9 836 L378.8 838 L378.7 840 L378.5 842 L378.4 844 L378.2 846 L378.0 848 L377.8 850 L377.6 852 L377.4 854 L377.2 856 L376.9 858 L376.7 860 L376.4 862 L376.1 864 L375.8 866 L375.4 868 L375.1 870 L374.7 872 L374.3 874 L373.8 876 L373.4 878 L372.9 880 L372.4 882 L371.9 884 L371.3 886 L370.7 888 L370.1 890 L369.4 892 L368.8 894 L368.1 896 L367.4 898 L366.6 900 L365.9 902 L365.1 904 L364.3 906 L363.5 908 L362.6 910 L361.8 912 L360.9 914 L360.1 916 L359.2 918 L358.3 920 L357.4 922 L356.5 924 L355.6 926 L354.7 928 L353.8 930 L352.8 932 L351.9 934 L351.0 936 L350.1 938 L349.2 940 L348.3 942 L347.4 944 L346.5 946 L345.6 948 L344.7 950 L343.8 952 L342.9 954 L342.1 956 L341.3 958 L340.4 960 L339.6 962 L338.9 964 L338.1 966 L337.4 968 L336.6 970 L335.9 972 L335.3 974 L334.6 976 L334.0 978 L777.0 978 L777.6 976 L778.3 974 L778.9 972 L779.6 970 L780.4 968 L781.1 966 L781.9 964 L782.6 962 L783.4 960 L784.3 958 L785.1 956 L785.9 954 L786.8 952 L787.7 950 L788.6 948 L789.5 946 L790.4 944 L791.3 942 L792.2 940 L793.1 938 L794.0 936 L794.9 934 L795.8 932 L796.8 930 L797.7 928 L798.6 926 L799.5 924 L800.4 922 L801.3 920 L802.2 918 L803.1 916 L803.9 914 L804.8 912 L805.6 910 L806.5 908 L807.3 906 L808.1 904 L808.9 902 L809.6 900 L810.4 898 L811.1 896 L811.8 894 L812.4 892 L813.1 890 L813.7 888 L814.3 886 L814.9 884 L815.4 882 L815.9 880 L816.4 878 L816.8 876 L817.3 874 L817.7 872 L818.1 870 L818.4 868 L818.8 866 L819.1 864 L819.4 862 L819.7 860 L819.9 858 L820.2 856 L820.4 854 L820.6 852 L820.8 850 L821.0 848 L821.2 846 L821.4 844 L821.5 842 L821.7 840 L821.8 838 L821.9 836 L822.1 834 L822.2 832 L822.3 830 L822.4 828 L822.5 826 L822.6 824 L822.7 822 L822.8 820 L822.9 818 L823.0 816 L823.1 814 L823.2 812 L823.3 810 L823.4 808 L823.5 806 L823.6 804 L823.6 802 L823.7 800 L823.8 798 L823.8 796 L823.8 794 L823.8 792 L823.8 790 L823.8 788 L823.7 786 L823.6 784 L823.5 782 L823.4 780 L823.3 778 L823.1 776 L823.0 774 L822.8 772 L822.6 770 L822.4 768 L822.2 766 L822.0 764 L821.8 762 L821.6 760 L821.3 758 L821.1 756 L820.9 754 L820.6 752 L820.4 750 L820.1 748 L819.9 746 L819.6 744 L819.4 742 L819.1 740 L818.8 738 L818.5 736 L818.3 734 L818.0 732 L817.7 730 L817.4 728 L817.1 726 L816.8 724 L816.4 722 L816.1 720 L815.8 718 L815.4 716 L815.1 714 L814.7 712 L814.4 710 L814.0 708 L813.6 706 L813.2 704 L812.8 702 L812.4 700 L812.0 698 L811.6 696 L811.2 694 L810.7 692 L810.3 690 L809.8 688 L809.3 686 L808.9 684 L808.4 682 L807.9 680 L807.4 678 L806.9 676 L806.4 674 L805.8 672 L805.3 670 L804.8 668 L804.3 666 L803.7 664 L803.2 662 L802.7 660 L802.1 658 L801.6 656 L801.0 654 L800.5 652 L799.9 650 L799.4 648 L798.8 646 L798.3 644 L797.7 642 L797.2 640 L796.6 638 L796.1 636 L795.6 634 L795.0 632 L794.5 630 L793.9 628 L793.4 626 L792.9 624 L792.3 622 L791.8 620 L791.3 618 L790.8 616 L790.2 614 L789.7 612 L789.2 610 L788.6 608 L788.1 606 L787.6 604 L787.1 602 L786.5 600 L786.0 598 L785.5 596 L784.9 594 L784.4 592 L783.8 590 L783.3 588 L782.8 586 L782.2 584 L781.7 582 L781.1 580 L780.6 578 L780.0 576 L779.4 574 L778.9 572 L778.3 570 L777.7 568 L777.2 566 L776.6 564 L776.0 562 L775.4 560 L774.9 558 L774.3 556 L773.7 554 L773.1 552 L772.6 550 L772.0 548 L771.4 546 L770.8 544 L770.3 542 L769.7 540 L769.1 538 L768.6 536 L768.0 534 L767.5 532 L766.9 530 L766.4 528 L765.9 526 L765.3 524 L764.8 522 L764.3 520 L763.8 518 L763.3 516 L762.8 514 L762.3 512 L761.8 510 L761.4 508 L760.9 506 L760.5 504 L760.0 502 L759.6 500 L759.1 498 L758.7 496 L758.3 494 L757.9 492 L757.5 490 L757.1 488 L756.7 486 L756.3 484 L755.9 482 L755.5 480 L755.1 478 L754.8 476 L754.4 474 L754.0 472 L753.7 470 L753.3 468 L753.0 466 L752.6 464 L752.3 462 L752.0 460 L751.6 458 L751.3 456 L751.0 454 L750.7 452 L750.3 450 L750.0 448 L749.7 446 L749.4 444 L749.1 442 L748.8 440 L748.5 438 L748.3 436 L748.0 434 L747.7 432 L747.5 430 L747.2 428 L746.9 426 L746.7 424 L746.5 422 L746.3 420 L746.0 418 L745.8 416 L745.6 414 L745.4 412 L745.3 410 L745.1 408 L744.9 406 L744.8 404 L744.6 402 L744.5 400 L744.4 398 L744.3 396 L744.2 394 L744.1 392 L744.0 390 L743.9 388 L743.9 386 L743.8 384 L743.8 382 L743.8 380 L743.8 378 L743.7 376 L743.8 374 L743.8 372 L743.8 370 L743.8 368 L743.9 366 L743.9 364 L744.0 362 L744.0 360 L744.1 358 L744.2 356 L744.3 354 L744.4 352 L744.6 350 L744.7 348 L744.8 346 L745.0 344 L745.2 342 L745.4 340 L745.6 338 L745.8 336 L746.0 334 L746.3 332 L746.5 330 L746.8 328 L747.1 326 L747.4 324 L747.7 322 L748.1 320 L748.4 318 L748.8 316 L749.1 314 L749.5 312 L749.9 310 L750.3 308 L750.8 306 L751.2 304 L751.7 302 L752.1 300 L752.6 298 L753.1 296 L753.6 294 L754.1 292 L754.7 290 L755.2 288 L755.8 286 L756.4 284 L757.0 282 L757.6 280 L758.2 278 L758.8 276 L759.4 274 L760.1 272 L760.8 270 L761.4 268 L762.1 266 L762.8 264 L763.5 262 L764.3 260 L765.0 258 L765.8 256 L766.5 254 L767.3 252 L768.1 250 L768.9 248 L769.7 246 L770.5 244 L771.4 242 L772.2 240 L773.1 238 L773.9 236 L774.8 234 L775.7 232 L776.6 230 L777.5 228 L778.5 226 L779.4 224 L780.4 222 L781.3 220 L782.3 218 L783.3 216 L784.3 214 L785.3 212 L786.3 210 L787.4 208 L788.4 206 L789.5 204 L790.5 202 L791.6 200 L792.7 198 L793.8 196Z" fill="#f8c1fc"/>
<g clip-path="url(#cpP)"><path d="M350.0 196 L348.9 198 L347.8 200 L346.7 202 L345.7 204 L344.6 206 L343.6 208 L342.5 210 L341.5 212 L340.5 214 L339.5 216 L338.5 218 L337.5 220 L336.6 222 L335.6 224 L334.7 226 L333.7 228 L332.8 230 L331.9 232 L331.0 234 L330.1 236 L329.3 238 L328.4 240 L327.6 242 L326.7 244 L325.9 246 L325.1 248 L324.3 250 L323.5 252 L322.7 254 L322.0 256 L321.2 258 L320.5 260 L319.7 262 L319.0 264 L318.3 266 L317.6 268 L317.0 270 L316.3 272 L315.6 274 L315.0 276 L314.4 278 L313.8 280 L313.2 282 L312.6 284 L312.0 286 L311.4 288 L310.9 290 L310.3 292 L309.8 294 L309.3 296 L308.8 298 L308.3 300 L307.9 302 L307.4 304 L307.0 306 L306.5 308 L306.1 310 L305.7 312 L305.3 314 L305.0 316 L304.6 318 L304.3 320 L303.9 322 L303.6 324 L303.3 326 L303.0 328 L302.7 330 L302.5 332 L302.2 334 L302.0 336 L301.8 338 L301.6 340 L301.4 342 L301.2 344 L301.0 346 L300.9 348 L300.8 350 L300.6 352 L300.5 354 L300.4 356 L300.3 358 L300.2 360 L300.2 362 L300.1 364 L300.1 366 L300.0 368 L300.0 370 L300.0 372 L300.0 374 L299.9 376 L300.0 378 L300.0 380 L300.0 382 L300.0 384 L300.1 386 L300.1 388 L300.2 390 L300.3 392 L300.4 394 L300.5 396 L300.6 398 L300.7 400 L300.8 402 L301.0 404 L301.1 406 L301.3 408 L301.5 410 L301.6 412 L301.8 414 L302.0 416 L302.2 418 L302.5 420 L302.7 422 L302.9 424 L303.1 426 L303.4 428 L303.7 430 L303.9 432 L304.2 434 L304.5 436 L304.7 438 L305.0 440 L305.3 442 L305.6 444 L305.9 446 L306.2 448 L306.5 450 L306.9 452 L307.2 454 L307.5 456 L307.8 458 L308.2 460 L308.5 462 L308.8 464 L309.2 466 L309.5 468 L309.9 470 L310.2 472 L310.6 474 L311.0 476 L311.3 478 L311.7 480 L312.1 482 L312.5 484 L312.9 486 L313.3 488 L313.7 490 L314.1 492 L314.5 494 L314.9 496 L315.3 498 L315.8 500 L316.2 502 L316.7 504 L317.1 506 L317.6 508 L318.0 510 L318.5 512 L319.0 514 L319.5 516 L320.0 518 L320.5 520 L321.0 522 L321.5 524 L322.1 526 L322.6 528 L323.1 530 L323.7 532 L324.2 534 L324.8 536 L325.3 538 L325.9 540 L326.5 542 L327.0 544 L327.6 546 L328.2 548 L328.8 550 L329.3 552 L329.9 554 L330.5 556 L331.1 558 L331.6 560 L332.2 562 L332.8 564 L333.4 566 L333.9 568 L334.5 570 L335.1 572 L335.6 574 L336.2 576 L336.8 578 L337.3 580 L337.9 582 L338.4 584 L339.0 586 L339.5 588 L340.0 590 L340.6 592 L341.1 594 L341.7 596 L342.2 598 L342.7 600 L343.3 602 L343.8 604 L344.3 606 L344.8 608 L345.4 610 L345.9 612 L346.4 614 L347.0 616 L347.5 618 L348.0 620 L348.5 622 L349.1 624 L349.6 626 L350.1 628 L350.7 630 L351.2 632 L351.8 634 L352.3 636 L352.8 638 L353.4 640 L353.9 642 L354.5 644 L355.0 646 L355.6 648 L356.1 650 L356.7 652 L357.2 654 L357.8 656 L358.3 658 L358.9 660 L359.4 662 L359.9 664 L360.5 666 L361.0 668 L361.5 670 L362.0 672 L362.6 674 L363.1 676 L363.6 678 L364.1 680 L364.6 682 L365.1 684 L365.5 686 L366.0 688 L366.5 690 L366.9 692 L367.4 694 L367.8 696 L368.2 698 L368.6 700 L369.0 702 L369.4 704 L369.8 706 L370.2 708 L370.6 710 L370.9 712 L371.3 714 L371.6 716 L372.0 718 L372.3 720 L372.6 722 L373.0 724 L373.3 726 L373.6 728 L373.9 730 L374.2 732 L374.5 734 L374.7 736 L375.0 738 L375.3 740 L375.6 742 L375.8 744 L376.1 746 L376.3 748 L376.6 750 L376.8 752 L377.1 754 L377.3 756 L377.5 758 L377.8 760 L378.0 762 L378.2 764 L378.4 766 L378.6 768 L378.8 770 L379.0 772 L379.2 774 L379.3 776 L379.5 778 L379.6 780 L379.7 782 L379.8 784 L379.9 786 L380.0 788 L380.0 790 L380.0 792 L380.0 794 L380.0 796 L380.0 798 L379.9 800 L379.8 802 L379.8 804 L379.7 806 L379.6 808 L379.5 810 L379.4 812 L379.3 814 L379.2 816 L379.1 818 L379.0 820 L378.9 822 L378.8 824 L378.7 826 L378.6 828 L378.5 830 L378.4 832 L378.3 834 L378.1 836 L378.0 838 L377.9 840 L377.7 842 L377.6 844 L377.4 846 L377.2 848 L377.0 850 L376.8 852 L376.6 854 L376.4 856 L376.1 858 L375.9 860 L375.6 862 L375.3 864 L375.0 866 L374.6 868 L374.3 870 L373.9 872 L373.5 874 L373.0 876 L372.6 878 L372.1 880 L371.6 882 L371.1 884 L370.5 886 L369.9 888 L369.3 890 L368.6 892 L368.0 894 L367.3 896 L366.6 898 L365.8 900 L365.1 902 L364.3 904 L363.5 906 L362.7 908 L361.8 910 L361.0 912 L360.1 914 L359.3 916 L358.4 918 L357.5 920 L356.6 922 L355.7 924 L354.8 926 L353.9 928 L353.0 930 L352.0 932 L351.1 934 L350.2 936 L349.3 938 L348.4 940 L347.5 942 L346.6 944 L345.7 946 L344.8 948 L343.9 950 L343.0 952 L342.1 954 L341.3 956 L340.5 958 L339.6 960 L338.8 962 L338.1 964 L337.3 966 L336.6 968 L335.8 970 L335.1 972 L334.5 974 L333.8 976 L333.2 978" fill="none" stroke="#c79ae8" stroke-width="10" opacity=".62" filter="url(#b2)" transform="translate(0,3)"/></g>
<path d="M368.5 196 L367.4 198 L366.3 200 L365.2 202 L364.2 204 L363.1 206 L362.1 208 L361.0 210 L360.0 212 L359.0 214 L358.0 216 L357.0 218 L356.0 220 L355.1 222 L354.1 224 L353.2 226 L352.2 228 L351.3 230 L350.4 232 L349.5 234 L348.6 236 L347.8 238 L346.9 240 L346.1 242 L345.2 244 L344.4 246 L343.6 248 L342.8 250 L342.0 252 L341.2 254 L340.5 256 L339.7 258 L339.0 260 L338.2 262 L337.5 264 L336.8 266 L336.1 268 L335.5 270 L334.8 272 L334.1 274 L333.5 276 L332.9 278 L332.3 280 L331.7 282 L331.1 284 L330.5 286 L329.9 288 L329.4 290 L328.8 292 L328.3 294 L327.8 296 L327.3 298 L326.8 300 L326.4 302 L325.9 304 L325.5 306 L325.0 308 L324.6 310 L324.2 312 L323.8 314 L323.5 316 L323.1 318 L322.8 320 L322.4 322 L322.1 324 L321.8 326 L321.5 328 L321.2 330 L321.0 332 L320.7 334 L320.5 336 L320.3 338 L320.1 340 L319.9 342 L319.7 344 L319.5 346 L319.4 348 L319.3 350 L319.1 352 L319.0 354 L318.9 356 L318.8 358 L318.7 360 L318.7 362 L318.6 364 L318.6 366 L318.5 368 L318.5 370 L318.5 372 L318.5 374 L318.4 376 L318.5 378 L318.5 380 L318.5 382 L318.5 384 L318.6 386 L318.6 388 L318.7 390 L318.8 392 L318.9 394 L319.0 396 L319.1 398 L319.2 400 L319.3 402 L319.5 404 L319.6 406 L319.8 408 L320.0 410 L320.1 412 L320.3 414 L320.5 416 L320.7 418 L321.0 420 L321.2 422 L321.4 424 L321.6 426 L321.9 428 L322.2 430 L322.4 432 L322.7 434 L323.0 436 L323.2 438 L323.5 440 L323.8 442 L324.1 444 L324.4 446 L324.7 448 L325.0 450 L325.4 452 L325.7 454 L326.0 456 L326.3 458 L326.7 460 L327.0 462 L327.3 464 L327.7 466 L328.0 468 L328.4 470 L328.7 472 L329.1 474 L329.5 476 L329.8 478 L330.2 480 L330.6 482 L331.0 484 L331.4 486 L331.8 488 L332.2 490 L332.6 492 L333.0 494 L333.4 496 L333.8 498 L334.3 500 L334.7 502 L335.2 504 L335.6 506 L336.1 508 L336.5 510 L337.0 512 L337.5 514 L338.0 516 L338.5 518 L339.0 520 L339.5 522 L340.0 524 L340.6 526 L341.1 528 L341.6 530 L342.2 532 L342.7 534 L343.3 536 L343.8 538 L344.4 540 L345.0 542 L345.5 544 L346.1 546 L346.7 548 L347.3 550 L347.8 552 L348.4 554 L349.0 556 L349.6 558 L350.1 560 L350.7 562 L351.3 564 L351.9 566 L352.4 568 L353.0 570 L353.6 572 L354.1 574 L354.7 576 L355.3 578 L355.8 580 L356.4 582 L356.9 584 L357.5 586 L358.0 588 L358.5 590 L359.1 592 L359.6 594 L360.2 596 L360.7 598 L361.2 600 L361.8 602 L362.3 604 L362.8 606 L363.3 608 L363.9 610 L364.4 612 L364.9 614 L365.5 616 L366.0 618 L366.5 620 L367.0 622 L367.6 624 L368.1 626 L368.6 628 L369.2 630 L369.7 632 L370.3 634 L370.8 636 L371.3 638 L371.9 640 L372.4 642 L373.0 644 L373.5 646 L374.1 648 L374.6 650 L375.2 652 L375.7 654 L376.3 656 L376.8 658 L377.4 660 L377.9 662 L378.4 664 L379.0 666 L379.5 668 L380.0 670 L380.5 672 L381.1 674 L381.6 676 L382.1 678 L382.6 680 L383.1 682 L383.6 684 L384.0 686 L384.5 688 L385.0 690 L385.4 692 L385.9 694 L386.3 696 L386.7 698 L387.1 700 L387.5 702 L387.9 704 L388.3 706 L388.7 708 L389.1 710 L389.4 712 L389.8 714 L390.1 716 L390.5 718 L390.8 720 L391.1 722 L391.5 724 L391.8 726 L392.1 728 L392.4 730 L392.7 732 L393.0 734 L393.2 736 L393.5 738 L393.8 740 L394.1 742 L394.3 744 L394.6 746 L394.8 748 L395.1 750 L395.3 752 L395.6 754 L395.8 756 L396.0 758 L396.3 760 L396.5 762 L396.7 764 L396.9 766 L397.1 768 L397.3 770 L397.5 772 L397.7 774 L397.8 776 L398.0 778 L398.1 780 L398.2 782 L398.3 784 L398.4 786 L398.5 788 L398.5 790 L398.5 792 L398.5 794 L398.5 796 L398.5 798 L398.4 800 L398.3 802 L398.3 804 L398.2 806 L398.1 808 L398.0 810 L397.9 812 L397.8 814 L397.7 816 L397.6 818 L397.5 820 L397.4 822 L397.3 824 L397.2 826 L397.1 828 L397.0 830 L396.9 832 L396.8 834 L396.6 836 L396.5 838 L396.4 840 L396.2 842 L396.1 844 L395.9 846 L395.7 848 L395.5 850 L395.3 852 L395.1 854 L394.9 856 L394.6 858 L394.4 860 L394.1 862 L393.8 864 L393.5 866 L393.1 868 L392.8 870 L392.4 872 L392.0 874 L391.5 876 L391.1 878 L390.6 880 L390.1 882 L389.6 884 L389.0 886 L388.4 888 L387.8 890 L387.1 892 L386.5 894 L385.8 896 L385.1 898 L384.3 900 L383.6 902 L382.8 904 L382.0 906 L381.2 908 L380.3 910 L379.5 912 L378.6 914 L377.8 916 L376.9 918 L376.0 920 L375.1 922 L374.2 924 L373.3 926 L372.4 928 L371.5 930 L370.5 932 L369.6 934 L368.7 936 L367.8 938 L366.9 940 L366.0 942 L365.1 944 L364.2 946 L363.3 948 L362.4 950 L361.5 952 L360.6 954 L359.8 956 L359.0 958 L358.1 960 L357.3 962 L356.6 964 L355.8 966 L355.1 968 L354.3 970 L353.6 972 L353.0 974 L352.3 976 L351.7 978 L760.2 978 L760.8 976 L761.5 974 L762.1 972 L762.8 970 L763.6 968 L764.3 966 L765.1 964 L765.8 962 L766.6 960 L767.5 958 L768.3 956 L769.1 954 L770.0 952 L770.9 950 L771.8 948 L772.7 946 L773.6 944 L774.5 942 L775.4 940 L776.3 938 L777.2 936 L778.1 934 L779.0 932 L780.0 930 L780.9 928 L781.8 926 L782.7 924 L783.6 922 L784.5 920 L785.4 918 L786.3 916 L787.1 914 L788.0 912 L788.8 910 L789.7 908 L790.5 906 L791.3 904 L792.1 902 L792.8 900 L793.6 898 L794.3 896 L795.0 894 L795.6 892 L796.3 890 L796.9 888 L797.5 886 L798.1 884 L798.6 882 L799.1 880 L799.6 878 L800.0 876 L800.5 874 L800.9 872 L801.3 870 L801.6 868 L802.0 866 L802.3 864 L802.6 862 L802.9 860 L803.1 858 L803.4 856 L803.6 854 L803.8 852 L804.0 850 L804.2 848 L804.4 846 L804.6 844 L804.7 842 L804.9 840 L805.0 838 L805.1 836 L805.3 834 L805.4 832 L805.5 830 L805.6 828 L805.7 826 L805.8 824 L805.9 822 L806.0 820 L806.1 818 L806.2 816 L806.3 814 L806.4 812 L806.5 810 L806.6 808 L806.7 806 L806.8 804 L806.8 802 L806.9 800 L807.0 798 L807.0 796 L807.0 794 L807.0 792 L807.0 790 L807.0 788 L806.9 786 L806.8 784 L806.7 782 L806.6 780 L806.5 778 L806.3 776 L806.2 774 L806.0 772 L805.8 770 L805.6 768 L805.4 766 L805.2 764 L805.0 762 L804.8 760 L804.5 758 L804.3 756 L804.1 754 L803.8 752 L803.6 750 L803.3 748 L803.1 746 L802.8 744 L802.6 742 L802.3 740 L802.0 738 L801.7 736 L801.5 734 L801.2 732 L800.9 730 L800.6 728 L800.3 726 L800.0 724 L799.6 722 L799.3 720 L799.0 718 L798.6 716 L798.3 714 L797.9 712 L797.6 710 L797.2 708 L796.8 706 L796.4 704 L796.0 702 L795.6 700 L795.2 698 L794.8 696 L794.4 694 L793.9 692 L793.5 690 L793.0 688 L792.5 686 L792.1 684 L791.6 682 L791.1 680 L790.6 678 L790.1 676 L789.6 674 L789.0 672 L788.5 670 L788.0 668 L787.5 666 L786.9 664 L786.4 662 L785.9 660 L785.3 658 L784.8 656 L784.2 654 L783.7 652 L783.1 650 L782.6 648 L782.0 646 L781.5 644 L780.9 642 L780.4 640 L779.8 638 L779.3 636 L778.8 634 L778.2 632 L777.7 630 L777.1 628 L776.6 626 L776.1 624 L775.5 622 L775.0 620 L774.5 618 L774.0 616 L773.4 614 L772.9 612 L772.4 610 L771.8 608 L771.3 606 L770.8 604 L770.3 602 L769.7 600 L769.2 598 L768.7 596 L768.1 594 L767.6 592 L767.0 590 L766.5 588 L766.0 586 L765.4 584 L764.9 582 L764.3 580 L763.8 578 L763.2 576 L762.6 574 L762.1 572 L761.5 570 L760.9 568 L760.4 566 L759.8 564 L759.2 562 L758.6 560 L758.1 558 L757.5 556 L756.9 554 L756.3 552 L755.8 550 L755.2 548 L754.6 546 L754.0 544 L753.5 542 L752.9 540 L752.3 538 L751.8 536 L751.2 534 L750.7 532 L750.1 530 L749.6 528 L749.1 526 L748.5 524 L748.0 522 L747.5 520 L747.0 518 L746.5 516 L746.0 514 L745.5 512 L745.0 510 L744.6 508 L744.1 506 L743.7 504 L743.2 502 L742.8 500 L742.3 498 L741.9 496 L741.5 494 L741.1 492 L740.7 490 L740.3 488 L739.9 486 L739.5 484 L739.1 482 L738.7 480 L738.3 478 L738.0 476 L737.6 474 L737.2 472 L736.9 470 L736.5 468 L736.2 466 L735.8 464 L735.5 462 L735.2 460 L734.8 458 L734.5 456 L734.2 454 L733.9 452 L733.5 450 L733.2 448 L732.9 446 L732.6 444 L732.3 442 L732.0 440 L731.7 438 L731.5 436 L731.2 434 L730.9 432 L730.7 430 L730.4 428 L730.1 426 L729.9 424 L729.7 422 L729.5 420 L729.2 418 L729.0 416 L728.8 414 L728.6 412 L728.5 410 L728.3 408 L728.1 406 L728.0 404 L727.8 402 L727.7 400 L727.6 398 L727.5 396 L727.4 394 L727.3 392 L727.2 390 L727.1 388 L727.1 386 L727.0 384 L727.0 382 L727.0 380 L727.0 378 L726.9 376 L727.0 374 L727.0 372 L727.0 370 L727.0 368 L727.1 366 L727.1 364 L727.2 362 L727.2 360 L727.3 358 L727.4 356 L727.5 354 L727.6 352 L727.8 350 L727.9 348 L728.0 346 L728.2 344 L728.4 342 L728.6 340 L728.8 338 L729.0 336 L729.2 334 L729.5 332 L729.7 330 L730.0 328 L730.3 326 L730.6 324 L730.9 322 L731.3 320 L731.6 318 L732.0 316 L732.3 314 L732.7 312 L733.1 310 L733.5 308 L734.0 306 L734.4 304 L734.9 302 L735.3 300 L735.8 298 L736.3 296 L736.8 294 L737.3 292 L737.9 290 L738.4 288 L739.0 286 L739.6 284 L740.2 282 L740.8 280 L741.4 278 L742.0 276 L742.6 274 L743.3 272 L744.0 270 L744.6 268 L745.3 266 L746.0 264 L746.7 262 L747.5 260 L748.2 258 L749.0 256 L749.7 254 L750.5 252 L751.3 250 L752.1 248 L752.9 246 L753.7 244 L754.6 242 L755.4 240 L756.3 238 L757.1 236 L758.0 234 L758.9 232 L759.8 230 L760.7 228 L761.7 226 L762.6 224 L763.6 222 L764.5 220 L765.5 218 L766.5 216 L767.5 214 L768.5 212 L769.5 210 L770.6 208 L771.6 206 L772.7 204 L773.7 202 L774.8 200 L775.9 198 L777.0 196Z" fill="#ee5dfa"/>
<g clip-path="url(#cpM)"><path d="M368.0 196 L366.9 198 L365.8 200 L364.7 202 L363.7 204 L362.6 206 L361.6 208 L360.5 210 L359.5 212 L358.5 214 L357.5 216 L356.5 218 L355.5 220 L354.6 222 L353.6 224 L352.7 226 L351.7 228 L350.8 230 L349.9 232 L349.0 234 L348.1 236 L347.3 238 L346.4 240 L345.6 242 L344.7 244 L343.9 246 L343.1 248 L342.3 250 L341.5 252 L340.7 254 L340.0 256 L339.2 258 L338.5 260 L337.7 262 L337.0 264 L336.3 266 L335.6 268 L335.0 270 L334.3 272 L333.6 274 L333.0 276 L332.4 278 L331.8 280 L331.2 282 L330.6 284 L330.0 286 L329.4 288 L328.9 290 L328.3 292 L327.8 294 L327.3 296 L326.8 298 L326.3 300 L325.9 302 L325.4 304 L325.0 306 L324.5 308 L324.1 310 L323.7 312 L323.3 314 L323.0 316 L322.6 318 L322.3 320 L321.9 322 L321.6 324 L321.3 326 L321.0 328 L320.7 330 L320.5 332 L320.2 334 L320.0 336 L319.8 338 L319.6 340 L319.4 342 L319.2 344 L319.0 346 L318.9 348 L318.8 350 L318.6 352 L318.5 354 L318.4 356 L318.3 358 L318.2 360 L318.2 362 L318.1 364 L318.1 366 L318.0 368 L318.0 370 L318.0 372 L318.0 374 L317.9 376 L318.0 378 L318.0 380 L318.0 382 L318.0 384 L318.1 386 L318.1 388 L318.2 390 L318.3 392 L318.4 394 L318.5 396 L318.6 398 L318.7 400 L318.8 402 L319.0 404 L319.1 406 L319.3 408 L319.5 410 L319.6 412 L319.8 414 L320.0 416 L320.2 418 L320.5 420 L320.7 422 L320.9 424 L321.1 426 L321.4 428 L321.7 430 L321.9 432 L322.2 434 L322.5 436 L322.7 438 L323.0 440 L323.3 442 L323.6 444 L323.9 446 L324.2 448 L324.5 450 L324.9 452 L325.2 454 L325.5 456 L325.8 458 L326.2 460 L326.5 462 L326.8 464 L327.2 466 L327.5 468 L327.9 470 L328.2 472 L328.6 474 L329.0 476 L329.3 478 L329.7 480 L330.1 482 L330.5 484 L330.9 486 L331.3 488 L331.7 490 L332.1 492 L332.5 494 L332.9 496 L333.3 498 L333.8 500 L334.2 502 L334.7 504 L335.1 506 L335.6 508 L336.0 510 L336.5 512 L337.0 514 L337.5 516 L338.0 518 L338.5 520 L339.0 522 L339.5 524 L340.1 526 L340.6 528 L341.1 530 L341.7 532 L342.2 534 L342.8 536 L343.3 538 L343.9 540 L344.5 542 L345.0 544 L345.6 546 L346.2 548 L346.8 550 L347.3 552 L347.9 554 L348.5 556 L349.1 558 L349.6 560 L350.2 562 L350.8 564 L351.4 566 L351.9 568 L352.5 570 L353.1 572 L353.6 574 L354.2 576 L354.8 578 L355.3 580 L355.9 582 L356.4 584 L357.0 586 L357.5 588 L358.0 590 L358.6 592 L359.1 594 L359.7 596 L360.2 598 L360.7 600 L361.3 602 L361.8 604 L362.3 606 L362.8 608 L363.4 610 L363.9 612 L364.4 614 L365.0 616 L365.5 618 L366.0 620 L366.5 622 L367.1 624 L367.6 626 L368.1 628 L368.7 630 L369.2 632 L369.8 634 L370.3 636 L370.8 638 L371.4 640 L371.9 642 L372.5 644 L373.0 646 L373.6 648 L374.1 650 L374.7 652 L375.2 654 L375.8 656 L376.3 658 L376.9 660 L377.4 662 L377.9 664 L378.5 666 L379.0 668 L379.5 670 L380.0 672 L380.6 674 L381.1 676 L381.6 678 L382.1 680 L382.6 682 L383.1 684 L383.5 686 L384.0 688 L384.5 690 L384.9 692 L385.4 694 L385.8 696 L386.2 698 L386.6 700 L387.0 702 L387.4 704 L387.8 706 L388.2 708 L388.6 710 L388.9 712 L389.3 714 L389.6 716 L390.0 718 L390.3 720 L390.6 722 L391.0 724 L391.3 726 L391.6 728 L391.9 730 L392.2 732 L392.5 734 L392.7 736 L393.0 738 L393.3 740 L393.6 742 L393.8 744 L394.1 746 L394.3 748 L394.6 750 L394.8 752 L395.1 754 L395.3 756 L395.5 758 L395.8 760 L396.0 762 L396.2 764 L396.4 766 L396.6 768 L396.8 770 L397.0 772 L397.2 774 L397.3 776 L397.5 778 L397.6 780 L397.7 782 L397.8 784 L397.9 786 L398.0 788 L398.0 790 L398.0 792 L398.0 794 L398.0 796 L398.0 798 L397.9 800 L397.8 802 L397.8 804 L397.7 806 L397.6 808 L397.5 810 L397.4 812 L397.3 814 L397.2 816 L397.1 818 L397.0 820 L396.9 822 L396.8 824 L396.7 826 L396.6 828 L396.5 830 L396.4 832 L396.3 834 L396.1 836 L396.0 838 L395.9 840 L395.7 842 L395.6 844 L395.4 846 L395.2 848 L395.0 850 L394.8 852 L394.6 854 L394.4 856 L394.1 858 L393.9 860 L393.6 862 L393.3 864 L393.0 866 L392.6 868 L392.3 870 L391.9 872 L391.5 874 L391.0 876 L390.6 878 L390.1 880 L389.6 882 L389.1 884 L388.5 886 L387.9 888 L387.3 890 L386.6 892 L386.0 894 L385.3 896 L384.6 898 L383.8 900 L383.1 902 L382.3 904 L381.5 906 L380.7 908 L379.8 910 L379.0 912 L378.1 914 L377.3 916 L376.4 918 L375.5 920 L374.6 922 L373.7 924 L372.8 926 L371.9 928 L371.0 930 L370.0 932 L369.1 934 L368.2 936 L367.3 938 L366.4 940 L365.5 942 L364.6 944 L363.7 946 L362.8 948 L361.9 950 L361.0 952 L360.1 954 L359.3 956 L358.5 958 L357.6 960 L356.8 962 L356.1 964 L355.3 966 L354.6 968 L353.8 970 L353.1 972 L352.5 974 L351.8 976 L351.2 978" fill="none" stroke="#c94ae0" stroke-width="3" opacity=".35" filter="url(#b2)"/></g>
<rect x="262" y="216" width="1092" height="1.5" fill="#d9b8f0" opacity=".8"/>
</svg>
<div class="a" style="left:50px;top:1057px;width:1516px;height:22px;background:#2b2b2b"></div>
<div class="a" style="left:50px;top:1057px;width:60px;height:22px;background:#2a2a2a"></div>
<div class="a" style="left:110px;top:1057px;width:230px;height:22px;background:#303030"></div>
<div class="t" style="left:59px;top:1062.5px;font-size:11.5px;color:#e0e0e0">30.81%</div>
<div class="t" style="left:146px;top:1063.5px;font-size:10.4px;color:#a8a8a8">30 厘米 x 20.32厘米 (300 ppi)</div>
<svg style="left:326px;top:1063px" width="6" height="11" viewBox="0 0 6 11"><path d="M1 0.5 L5 5.5 L1 10.5" stroke="#b0b0b0" stroke-width="1.2" fill="none"/></svg>
<div class="a" style="left:60px;top:1079px;width:430px;height:1px;background:#e8e8e8"></div>
<div class="a" style="left:740px;top:1079px;width:60px;height:1px;background:#777"></div>
<div class="a" style="left:1566px;top:78px;width:20px;height:1002px;background:#2b2b2b"></div>
<div class="a" style="left:1586px;top:78px;width:3px;height:1002px;background:linear-gradient(90deg,#2b2b2b 0 1px,#1e1e1e 1px 2.4px,#2c2c2c 2.4px)"></div>
<div class="a" style="left:1589px;top:78px;width:48px;height:1002px;background:#323232"></div>
<div class="a" style="left:1637px;top:78px;width:2px;height:1002px;background:#1f1f1f"></div>
<div class="a" style="left:1639px;top:78px;width:259px;height:1002px;background:#2c2c2c"></div>
<div class="a" style="left:1898px;top:78px;width:22px;height:1002px;background:#2b2b2b"></div>
<div class="a" style="left:1566px;top:1057px;width:20px;height:23px;background:#303030"></div>
<div class="a" style="left:1639px;top:630px;width:38px;height:37px;background:#2f2f2f"></div>
<div class="a" style="left:1677px;top:630px;width:208px;height:37px;background:#4b4b4b"></div>
<div class="a" style="left:1885px;top:630px;width:13px;height:37px;background:#333"></div>
<svg style="left:1649.5px;top:641.0px" width="16" height="9.9" viewBox="0 0 16 10"><path d="M0 5 C3 -0.2 13 -0.2 16 5 C13 10.2 3 10.2 0 5Z" fill="#dcdcdc"/><circle cx="8" cy="5" r="3.2" fill="#2c2c2c"/><circle cx="9.2" cy="3.9" r="1" fill="#dcdcdc"/></svg>
<div class="a" style="left:1683px;top:634px;width:37px;height:26px;background-color:#fff;background-image:linear-gradient(45deg,#ccc 25%,transparent 25%,transparent 75%,#ccc 75%),linear-gradient(45deg,#ccc 25%,transparent 25%,transparent 75%,#ccc 75%);background-size:5px 5px;background-position:0 0,2.5px 2.5px"></div>
<svg style="left:1678px;top:630px" width="46" height="35" viewBox="0 0 46 35"><path d="M1.5 24 V33.5 H15.5 M30.5 33.5 H45 V24" stroke="#ececec" stroke-width="1.2" fill="none"/></svg>
<div class="t" style="left:1734px;top:641px;font-size:12.5px;color:#e6e6e6">矩形 3 拷贝</div>
<div class="t" style="left:1866px;top:639px;font-size:15px;font-style:italic;color:#d0d0d0;font-family:'Liberation Serif',serif">fx</div>
<div class="a" style="left:1639px;top:667px;width:38px;height:44px;background:#2c2c2c"></div>
<div class="a" style="left:1677px;top:667px;width:221px;height:43px;background:#2e2e2e"></div>
<svg style="left:1701.5px;top:672.0px" width="16" height="9.9" viewBox="0 0 16 10"><path d="M0 5 C3 -0.2 13 -0.2 16 5 C13 10.2 3 10.2 0 5Z" fill="#dcdcdc"/><circle cx="8" cy="5" r="3.2" fill="#2e2e2e"/><circle cx="9.2" cy="3.9" r="1" fill="#dcdcdc"/></svg>
<div class="t" style="left:1724px;top:670px;font-size:12px;color:#e2e2e2">效果</div>
<svg style="left:1722.5px;top:695.0px" width="16" height="9.9" viewBox="0 0 16 10"><path d="M0 5 C3 -0.2 13 -0.2 16 5 C13 10.2 3 10.2 0 5Z" fill="#dcdcdc"/><circle cx="8" cy="5" r="3.2" fill="#2e2e2e"/><circle cx="9.2" cy="3.9" r="1" fill="#dcdcdc"/></svg>
<div class="t" style="left:1745px;top:693px;font-size:12px;color:#e2e2e2">投影</div>
<div class="a" style="left:1639px;top:710px;width:259px;height:1px;background:#262626"></div>
<div class="a" style="left:1639px;top:711px;width:259px;height:40px;background:#303030"></div>
<div class="a" style="left:1677px;top:711px;width:1px;height:80px;background:#282828"></div>
<svg style="left:1649.5px;top:728.0px" width="16" height="9.9" viewBox="0 0 16 10"><path d="M0 5 C3 -0.2 13 -0.2 16 5 C13 10.2 3 10.2 0 5Z" fill="#dcdcdc"/><circle cx="8" cy="5" r="3.2" fill="#303030"/><circle cx="9.2" cy="3.9" r="1" fill="#dcdcdc"/></svg>
<div class="a" style="left:1682px;top:718px;width:39px;height:28px;border:1px solid #6a6a6a;background-color:#fff;background-image:linear-gradient(45deg,#ccc 25%,transparent 25%,transparent 75%,#ccc 75%),linear-gradient(45deg,#ccc 25%,transparent 25%,transparent 75%,#ccc 75%);background-size:5px 5px;background-position:0 0,2.5px 2.5px"></div>
<svg style="left:1683px;top:719px" width="18" height="26" viewBox="0 0 18 26"><path d="M1 0 H16 C15 6 16 9 17 13 C18 18 17 22 17.5 26 H1 C0 20 2 14 1 8 Z" fill="#ee5dfa"/></svg>
<svg style="left:1704px;top:730px" width="17" height="17" viewBox="0 0 17 17"><rect x="0" y="0" width="17" height="17" fill="#3a3a3a"/><rect x="4.5" y="4.5" width="9" height="9" fill="none" stroke="#d8d8d8" stroke-width="1.3"/><g fill="#3a3a3a" stroke="#d8d8d8" stroke-width="1"><rect x="2.5" y="2.5" width="3.6" height="3.6"/><rect x="11.5" y="2.5" width="3.6" height="3.6"/><rect x="2.5" y="11.5" width="3.6" height="3.6"/><rect x="11.5" y="11.5" width="3.6" height="3.6"/></g></svg>
<div class="t" style="left:1734px;top:726px;font-size:12px;color:#e6e6e6">矩形 3</div>
<div class="a" style="left:1639px;top:750px;width:259px;height:1px;background:#262626"></div>
<div class="a" style="left:1639px;top:751px;width:259px;height:40px;background:#303030"></div>
<div class="a" style="left:1677px;top:711px;width:1px;height:80px;background:#282828"></div>
<svg style="left:1649.5px;top:768.0px" width="16" height="9.9" viewBox="0 0 16 10"><path d="M0 5 C3 -0.2 13 -0.2 16 5 C13 10.2 3 10.2 0 5Z" fill="#dcdcdc"/><circle cx="8" cy="5" r="3.2" fill="#303030"/><circle cx="9.2" cy="3.9" r="1" fill="#dcdcdc"/></svg>
<div class="a" style="left:1682px;top:758px;width:39px;height:28px;border:1px solid #6a8a8a;background:#b3f9f5"></div>
<div class="t" style="left:1734px;top:766px;font-size:12px;color:#e6e6e6">背景</div>
<svg style="left:1866px;top:764px" width="13" height="16" viewBox="0 0 13 16"><path d="M3.5 7 V4 a3 3 0 0 1 6 0 V7" fill="none" stroke="#d8d8d8" stroke-width="1.3"/><rect x="1" y="7" width="11" height="8" rx="1" fill="none" stroke="#d8d8d8" stroke-width="1.3"/><circle cx="6.5" cy="11" r="1.3" fill="#d8d8d8"/></svg>
<div class="a" style="left:1639px;top:791px;width:259px;height:1px;background:#282828"></div>
<div class="a" style="left:1639px;top:1048px;width:281px;height:28px;background:#323232"></div>
<div class="a" style="left:1566px;top:1076px;width:354px;height:4px;background:#262626"></div>
<svg style="left:1688px;top:1057px" width="18" height="10" viewBox="0 0 18 10"><path d="M7 1.5 H4.5 a3.5 3.5 0 0 0 0 7 H7 M11 1.5 H13.5 a3.5 3.5 0 0 1 0 7 H11 M5.5 5 H12.5" stroke="#808080" stroke-width="1.7" fill="none"/></svg>
<div class="t" style="left:1719px;top:1053px;font-size:17px;font-style:italic;color:#808080;font-family:'Liberation Sans',sans-serif">fx</div>
<svg style="left:1733px;top:1069px" width="4" height="2.5" viewBox="0 0 5 3"><path d="M0 0 H5 L2.5 3Z" fill="#808080"/></svg>
<svg style="left:1751px;top:1056px" width="16" height="12" viewBox="0 0 16 12"><rect x="0" y="0" width="16" height="12" fill="#808080"/><circle cx="8" cy="6" r="3.4" fill="#323232"/></svg>
<svg style="left:1781px;top:1055px" width="15" height="15" viewBox="0 0 15 15"><circle cx="7" cy="7" r="5.6" fill="none" stroke="#808080" stroke-width="1.5"/><path d="M3 11 A5.6 5.6 0 0 0 11 3 Z" fill="#808080"/><path d="M11 12 H15 L13 14.5Z" fill="#808080"/></svg>
<svg style="left:1810px;top:1056px" width="16" height="13" viewBox="0 0 16 13"><path d="M0 1 H6 L7.5 3 H16 V13 H0 Z" fill="#808080"/></svg>
<svg style="left:1843px;top:1055px" width="14" height="14" viewBox="0 0 14 14"><path d="M1 1 H13 V13 H6 L1 8 Z M1 8 H6 V13" fill="none" stroke="#808080" stroke-width="1.5"/></svg>
<svg style="left:1873px;top:1054px" width="14" height="16" viewBox="0 0 14 16"><path d="M1 3.5 H13 M5 3 V1 H9 V3 M2.5 4 V15 H11.5 V4 M5.2 6 V13 M7 6 V13 M8.8 6 V13" fill="none" stroke="#808080" stroke-width="1.4"/></svg>
<div class="a" style="left:982px;top:48px;width:928px;height:600.5px;background:#353535;border:1px solid #2a2a2a;box-shadow:0 3px 16px rgba(0,0,0,.45)"></div>
<div class="a" style="left:982px;top:48px;width:928px;height:37px;background:#ffffff"></div>
<div class="t" style="left:991px;top:58px;font-size:15px;color:#000">图层样式</div>
<svg style="left:1883px;top:60px" width="12" height="12" viewBox="0 0 12 12"><path d="M0.5 0.5 L11.5 11.5 M11.5 0.5 L0.5 11.5" stroke="#111" stroke-width="1.2" fill="none"/></svg>
<div class="a" style="left:995px;top:102px;width:286px;height:534px;background:#323232;border:1px solid #2a2a2a"></div>
<div class="a" style="left:1259px;top:103px;width:21px;height:499px;background:#282828"></div>
<div class="row" style="top:104.3px;"><div class="lb" style="left:7px;color:#bcbcbc">样式</div></div>
<div class="row" style="top:136.8px;"><div class="lb" style="left:7px;color:#bcbcbc">混合选项</div></div>
<div class="row" style="top:169.4px;"><div class="cb" style="left:7px;top:11px"></div><div class="lb" style="left:23px">斜面和浮雕</div></div>
<div class="row" style="top:201.9px;"><div class="cb" style="left:20px;top:11px"></div><div class="lb" style="left:36px">等高线</div></div>
<div class="row" style="top:234.5px;"><div class="cb" style="left:20px;top:11px"></div><div class="lb" style="left:36px">纹理</div></div>
<div class="row" style="top:267.1px;"><div class="cb" style="left:7px;top:11px"></div><div class="lb" style="left:23px">描边</div><div class="plus"></div></div>
<div class="row" style="top:299.6px;"><div class="cb" style="left:7px;top:11px"></div><div class="lb" style="left:23px">内阴影</div><div class="plus"></div></div>
<div class="row" style="top:332.1px;"><div class="cb" style="left:7px;top:11px"></div><div class="lb" style="left:23px">内发光</div></div>
<div class="row" style="top:364.7px;"><div class="cb" style="left:7px;top:11px"></div><div class="lb" style="left:23px">光泽</div></div>
<div class="row" style="top:397.2px;"><div class="cb" style="left:7px;top:11px"></div><div class="lb" style="left:23px">颜色叠加</div><div class="plus"></div></div>
<div class="row" style="top:429.8px;"><div class="cb" style="left:7px;top:11px"></div><div class="lb" style="left:23px">渐变叠加</div><div class="plus"></div></div>
<div class="row" style="top:462.3px;"><div class="cb" style="left:7px;top:11px"></div><div class="lb" style="left:23px">图案叠加</div></div>
<div class="row" style="top:494.9px;"><div class="cb" style="left:7px;top:11px"></div><div class="lb" style="left:23px">外发光</div></div>
<div class="row" style="top:527.4px;background:#4c4c4c;"><div class="cbon" style="left:7px;top:10.5px"><svg style="left:1.5px;top:2px" width="8" height="7" viewBox="0 0 8 7"><path d="M0.8 3.4 L3 5.8 L7.2 0.9" stroke="#222" stroke-width="1.7" fill="none"/></svg></div><div class="lb" style="left:23px">投影</div><div class="plus"></div></div>
<div class="t" style="left:1005px;top:610px;font-size:17px;font-style:italic;color:#d4d4d4">fx</div>
<svg style="left:1020px;top:626px" width="5" height="3" viewBox="0 0 5 3"><path d="M0 0 H5 L2.5 3Z" fill="#d4d4d4"/></svg>
<svg style="left:1041px;top:612px" width="14" height="14" viewBox="0 0 14 14"><path d="M7 0 L14 7 H10 V13 H4 V7 H0 Z" fill="#767676"/></svg>
<svg style="left:1074px;top:613px" width="14" height="14" viewBox="0 0 14 14"><path d="M7 14 L14 7 H10 V1 H4 V7 H0 Z" fill="#767676"/></svg>
<svg style="left:1254px;top:611px" width="13" height="16" viewBox="0 0 13 16"><path d="M0.5 3.5 H12.5 M4.5 3 V1 H8.5 V3 M2 4 V15 H11 V4 M4.6 6 V13 M6.5 6 V13 M8.4 6 V13" fill="none" stroke="#dcdcdc" stroke-width="1.4"/></svg>
<div class="grp" style="left:1302px;top:104px;width:415px;height:531px"></div>
<div class="gt" style="left:1322px;top:96px">投影</div>
<div class="grp" style="left:1314px;top:128px;width:390px;height:215px"></div>
<div class="gt" style="left:1334px;top:120px">结构</div>
<div class="grp" style="left:1314px;top:358px;width:390px;height:103px"></div>
<div class="gt" style="left:1334px;top:350px">品质</div>
<div class="lab" style="left:1285px;width:120px;top:156.5px">混合模式:</div>
<div class="a" style="left:1415px;top:154px;width:134px;height:26px;background:#2a2a2a;border:1px solid #3e3e3e;border-radius:3px"></div>
<div class="t" style="left:1424px;top:160.5px;font-size:12.2px;color:#ececec">正片叠底</div>
<svg style="left:1535px;top:165px" width="9" height="6" viewBox="0 0 9 6"><path d="M0.8 0.8 L4.5 4.6 L8.2 0.8" stroke="#b4b4b4" stroke-width="1.3" fill="none"/></svg>
<div class="a" style="left:1552px;top:150px;width:45px;height:29px;background:#1f7fd6;border:1px solid #17508a"></div>
<div class="lab" style="left:1285px;width:120px;top:186.5px">不透明度(O):</div>
<div class="trk" style="left:1421px;top:188.0px;width:119px"></div>
<svg style="left:1503.5px;top:191.5px" width="13" height="12" viewBox="0 0 13 12"><path d="M6.5 0 L12.5 7.2 V10.3 Q12.5 12 10.8 12 H2.2 Q0.5 12 0.5 10.3 V7.2 Z" fill="#f2f2f2"/></svg>
<div class="inp" style="left:1552px;top:184px;width:51px;height:20px">75</div>
<div class="t" style="left:1608px;top:187.8px;font-size:12px;color:#cfcfcf">%</div>
<div class="lab" style="left:1285px;width:120px;top:224.5px">角度(A):</div>
<svg style="left:1412px;top:209px" width="47" height="47" viewBox="0 0 47 47"><circle cx="23.5" cy="23.5" r="22" fill="none" stroke="#a0a0a0" stroke-width="1.1"/><path d="M23.5 23.5 V5" stroke="#c8c8c8" stroke-width="1.1"/><circle cx="23.5" cy="23.5" r="2.4" fill="#b4b4b4"/></svg>
<div class="inp" style="left:1463.5px;top:221px;width:50px;height:20px">90</div>
<div class="t" style="left:1519px;top:225.8px;font-size:12px;color:#cfcfcf">度</div>
<div class="cbon" style="left:1544.8px;top:225.8px"><svg style="left:1.5px;top:2px" width="8" height="7" viewBox="0 0 8 7"><path d="M0.8 3.4 L3 5.8 L7.2 0.9" stroke="#222" stroke-width="1.7" fill="none"/></svg></div>
<div class="t" style="left:1562px;top:226px;font-size:12px;color:#e0e0e0;letter-spacing:.55px">使用全局光(G)</div>
<div class="lab" style="left:1285px;width:120px;top:262.3px">距离(D):</div>
<div class="trk" style="left:1421px;top:263.7px;width:119px"></div>
<svg style="left:1427.3px;top:267.2px" width="13" height="12" viewBox="0 0 13 12"><path d="M6.5 0 L12.5 7.2 V10.3 Q12.5 12 10.8 12 H2.2 Q0.5 12 0.5 10.3 V7.2 Z" fill="#f2f2f2"/></svg>
<div class="inp" style="left:1552px;top:260px;width:51px;height:20px">11</div>
<div class="t" style="left:1608px;top:263.6px;font-size:12px;color:#cfcfcf">像素</div>
<div class="lab" style="left:1285px;width:120px;top:288.3px">扩展(R):</div>
<div class="trk" style="left:1421px;top:290.7px;width:119px"></div>
<svg style="left:1417.5px;top:294.2px" width="13" height="12" viewBox="0 0 13 12"><path d="M6.5 0 L12.5 7.2 V10.3 Q12.5 12 10.8 12 H2.2 Q0.5 12 0.5 10.3 V7.2 Z" fill="#f2f2f2"/></svg>
<div class="inp" style="left:1552px;top:286px;width:51px;height:20px">3</div>
<div class="t" style="left:1608px;top:289.6px;font-size:12px;color:#cfcfcf">%</div>
<div class="lab" style="left:1285px;width:120px;top:315.3px">大小(S):</div>
<div class="trk" style="left:1421px;top:316.7px;width:119px"></div>
<svg style="left:1437.5px;top:320.2px" width="13" height="12" viewBox="0 0 13 12"><path d="M6.5 0 L12.5 7.2 V10.3 Q12.5 12 10.8 12 H2.2 Q0.5 12 0.5 10.3 V7.2 Z" fill="#f2f2f2"/></svg>
<div class="inp" style="left:1552px;top:312px;width:51px;height:20px">35</div>
<div class="t" style="left:1608px;top:316.6px;font-size:12px;color:#cfcfcf">像素</div>
<div class="lab" style="left:1285px;width:120px;top:394.6px">等高线:</div>
<svg style="left:1415px;top:381px" width="58" height="43" viewBox="0 0 58 43"><rect x="0.5" y="0.5" width="57" height="42" fill="#2a2a2a" stroke="#464646"/><rect x="1" y="1" width="42" height="41" fill="#202020"/><path d="M1 1 H43 L1 42 Z" fill="#ffffff"/><path d="M43.5 1 V42" stroke="#464646"/><path d="M47 21.5 L50.5 25 L54 21.5" stroke="#b4b4b4" stroke-width="1.3" fill="none"/></svg>
<div class="cb" style="left:1489px;top:396.5px"></div>
<div class="t" style="left:1504.5px;top:395px;font-size:12px;color:#e0e0e0;letter-spacing:.5px">消除锯齿(L)</div>
<div class="lab" style="left:1285px;width:120px;top:432.2px">杂色(N):</div>
<div class="trk" style="left:1421px;top:433.9px;width:119px"></div>
<svg style="left:1413.5px;top:437.4px" width="13" height="12" viewBox="0 0 13 12"><path d="M6.5 0 L12.5 7.2 V10.3 Q12.5 12 10.8 12 H2.2 Q0.5 12 0.5 10.3 V7.2 Z" fill="#f2f2f2"/></svg>
<div class="inp" style="left:1552px;top:429px;width:51px;height:21px">0</div>
<div class="t" style="left:1608px;top:433.5px;font-size:12px;color:#cfcfcf">%</div>
<div class="cbon" style="left:1418px;top:469px"><svg style="left:1.5px;top:2px" width="8" height="7" viewBox="0 0 8 7"><path d="M0.8 3.4 L3 5.8 L7.2 0.9" stroke="#222" stroke-width="1.7" fill="none"/></svg></div>
<div class="t" style="left:1434px;top:468px;font-size:12px;color:#e0e0e0;letter-spacing:.5px">图层挖空投影(U)</div>
<div class="sbtn" style="left:1397px;top:489px;width:104px;height:24px">设置为默认值</div>
<div class="sbtn" style="left:1514px;top:489px;width:105px;height:24px">复位为默认值</div>
<div class="btn" style="left:1736px;top:104px;width:160px;height:31px;border:2px solid #2f62ad">确定</div>
<div class="btn" style="left:1736px;top:147px;width:160px;height:31px">取消</div>
<div class="btn" style="left:1736px;top:190px;width:160px;height:31px">新建样式(W)...</div>
<div class="a" style="left:1765px;top:236px;width:16px;height:16px;border-radius:3px;background:#e6e6e6"></div>
<svg style="left:1768px;top:239.5px" width="11" height="9" viewBox="0 0 11 9"><path d="M1 4.5 L4 7.6 L10 1" stroke="#222" stroke-width="2.1" fill="none"/></svg>
<div class="t" style="left:1788px;top:235px;font-size:16px;color:#e6e6e6;letter-spacing:1px">预览(V)</div>
<div class="a" style="left:1735px;top:266px;width:162px;height:162px;background:#2b2b2b;border:1px solid #2f2f2f"></div>
<div class="a" style="left:1776px;top:306px;width:80px;height:80px;background:#5b5b5b;box-shadow:0 4px 7px rgba(10,20,30,.6)"></div>
<svg style="left:1571px;top:207px" width="12" height="19" viewBox="0 0 12 19"><path d="M1 1 V15.5 L4.4 12.2 L7 18 L9.2 17 L6.6 11.4 H11.2 Z" fill="#fff" stroke="#000" stroke-width="1"/></svg>
<svg style="left:12.0px;top:118.0px" width="22" height="22" viewBox="0 0 22 22"><path d="M11 1.5 L13.8 5.2 H11.9 V10.1 H16.8 V8.2 L20.5 11 L16.8 13.8 V11.9 H11.9 V16.8 H13.8 L11 20.5 L8.2 16.8 H10.1 V11.9 H5.2 V13.8 L1.5 11 L5.2 8.2 V10.1 H10.1 V5.2 H8.2 Z" fill="#d4d4d4"/></svg>
<svg style="left:33px;top:135px" width="4" height="4" viewBox="0 0 4 4"><path d="M4 0 V4 H0Z" fill="#9a9a9a"/></svg>
<svg style="left:12.0px;top:150.0px" width="22" height="22" viewBox="0 0 22 22"><ellipse cx="11" cy="11" rx="9.3" ry="8.2" stroke="#d4d4d4" fill="none" stroke-width="1.5" stroke-dasharray="4.2 2"/></svg>
<svg style="left:33px;top:167px" width="4" height="4" viewBox="0 0 4 4"><path d="M4 0 V4 H0Z" fill="#9a9a9a"/></svg>
<svg style="left:12.0px;top:181.0px" width="22" height="22" viewBox="0 0 22 22"><path d="M7 15 C2 14 1 9 5 6 C10 2.5 19 3.5 20 8.5 C20.5 13 14 16 8 15 M7 15 a2 2 0 1 0 1.5 2.5 C9 19 7.5 20.5 6 21" stroke="#d4d4d4" fill="none" stroke-width="1.6"/></svg>
<svg style="left:33px;top:198px" width="4" height="4" viewBox="0 0 4 4"><path d="M4 0 V4 H0Z" fill="#9a9a9a"/></svg>
<svg style="left:12.0px;top:211.0px" width="22" height="22" viewBox="0 0 22 22"><path d="M2.5 19.5 L12 10" stroke="#d4d4d4" stroke-width="3.4" stroke-linecap="round"/><path d="M15.5 2 V8 M12.5 5 H18.5 M8 3 V6 M6.5 4.5 H9.5 M18 11 V14 M16.5 12.5 H19.5" stroke="#d4d4d4" stroke-width="1.2"/></svg>
<svg style="left:33px;top:228px" width="4" height="4" viewBox="0 0 4 4"><path d="M4 0 V4 H0Z" fill="#9a9a9a"/></svg>
<svg style="left:12.0px;top:243.0px" width="22" height="22" viewBox="0 0 22 22"><path d="M4.7 2 V15.5 H20.6 M0 5.5 H15.3 V20.4" stroke="#d4d4d4" fill="none" stroke-width="1.7"/></svg>
<svg style="left:33px;top:260px" width="4" height="4" viewBox="0 0 4 4"><path d="M4 0 V4 H0Z" fill="#9a9a9a"/></svg>
<svg style="left:12.0px;top:275.0px" width="22" height="22" viewBox="0 0 22 22"><path d="M3 19 L4 15 L11.5 7.5 L14.5 10.5 L7 18 Z" stroke="#d4d4d4" fill="none" stroke-width="1.5"/><path d="M10.5 5.5 L16.5 11.5 M12 7 L15 4 a2.4 2.4 0 0 1 3.4 3.4 L15.4 10.4" stroke="#d4d4d4" stroke-width="2.6" stroke-linecap="round" fill="#d4d4d4"/></svg>
<svg style="left:33px;top:292px" width="4" height="4" viewBox="0 0 4 4"><path d="M4 0 V4 H0Z" fill="#9a9a9a"/></svg>
<svg style="left:12.0px;top:306.0px" width="22" height="22" viewBox="0 0 22 22"><rect x="3.8" y="5.2" width="14" height="11.8" fill="#4c4c4c" stroke="#d4d4d4" stroke-width="1.5"/><path d="M7 2.5 V5 M10.6 2.5 V5 M14.3 2.5 V5 M7 17.2 V19.7 M10.6 17.2 V19.7 M14.3 17.2 V19.7 M1.2 8 H3.6 M1.2 11 H3.6 M1.2 14 H3.6 M18 8 H20.4 M18 11 H20.4 M18 14 H20.4" stroke="#d4d4d4" stroke-width="1.1"/></svg>
<svg style="left:33px;top:323px" width="4" height="4" viewBox="0 0 4 4"><path d="M4 0 V4 H0Z" fill="#9a9a9a"/></svg>
<svg style="left:12.0px;top:337.0px" width="22" height="22" viewBox="0 0 22 22"><path d="M19.8 2 C15.5 5 11.5 9.5 9.3 13 L12 15.3 C14.8 11.8 18.3 7 19.8 2Z" fill="#d4d4d4"/><path d="M8.6 13.6 C5.2 13.4 4.8 16.8 3 19 C7.5 20.4 11.3 18.6 11.4 15.9Z" fill="#d4d4d4"/></svg>
<svg style="left:33px;top:354px" width="4" height="4" viewBox="0 0 4 4"><path d="M4 0 V4 H0Z" fill="#9a9a9a"/></svg>
<svg style="left:12.0px;top:368.0px" width="22" height="22" viewBox="0 0 22 22"><circle cx="11" cy="5.6" r="3.7" fill="#d4d4d4"/><path d="M9.3 8 L9.8 12.6 H12.2 L12.7 8Z" fill="#d4d4d4"/><path d="M4.5 12.3 H17.5 Q18.8 12.3 18.8 13.6 V17.2 H3.2 V13.6 Q3.2 12.3 4.5 12.3Z" fill="#d4d4d4"/><path d="M4 19.2 H18" stroke="#d4d4d4" stroke-width="1.2"/></svg>
<svg style="left:33px;top:385px" width="4" height="4" viewBox="0 0 4 4"><path d="M4 0 V4 H0Z" fill="#9a9a9a"/></svg>
<svg style="left:12.0px;top:400.0px" width="22" height="22" viewBox="0 0 22 22"><path d="M20.5 2 C16 5.5 13 10 11.5 13 L13.5 14.8 C16 11.5 19 7 20.5 2Z" fill="#d4d4d4"/><path d="M10.5 14 C8.5 14 8 16.5 6 18.8 C9.5 19.6 12.3 18.3 12.6 15.8Z" fill="#d4d4d4"/><path d="M3.5 11 A6.5 6.5 0 0 1 13 5.5" stroke="#d4d4d4" fill="none" stroke-width="1.5" stroke-dasharray="2 1.4"/><path d="M0.5 8 L6.5 8 L3.5 12.5Z" fill="#d4d4d4"/></svg>
<svg style="left:33px;top:417px" width="4" height="4" viewBox="0 0 4 4"><path d="M4 0 V4 H0Z" fill="#9a9a9a"/></svg>
<svg style="left:12.0px;top:431.0px" width="22" height="22" viewBox="0 0 22 22"><path d="M3 13.5 L12 4.5 L19 9 L10.5 17.5 H5.5 Z" stroke="#d4d4d4" fill="none" stroke-width="1.6"/><path d="M12 4.5 L19 9 L14.2 13.8 L7.4 9.2Z" fill="#d4d4d4"/><path d="M4 20 H19" stroke="#d4d4d4" stroke-width="1.5"/></svg>
<svg style="left:33px;top:448px" width="4" height="4" viewBox="0 0 4 4"><path d="M4 0 V4 H0Z" fill="#9a9a9a"/></svg>
<svg style="left:12.0px;top:462.0px" width="22" height="22" viewBox="0 0 22 22"><defs><linearGradient id="gg" x1="0" x2="1"><stop offset="0" stop-color="#3a3a3a"/><stop offset="1" stop-color="#e0e0e0"/></linearGradient></defs><rect x="3" y="4.3" width="17" height="13.4" fill="url(#gg)" stroke="#d4d4d4" stroke-width="1.3"/></svg>
<svg style="left:33px;top:479px" width="4" height="4" viewBox="0 0 4 4"><path d="M4 0 V4 H0Z" fill="#9a9a9a"/></svg>
<svg style="left:12.0px;top:493.0px" width="22" height="22" viewBox="0 0 22 22"><path d="M3.5 20 L5.2 15.5 C3.8 11 5.5 5.5 10.5 4.2 C15.5 3 18.8 5.8 18.3 9.5 C17.8 13 14.5 14.3 12 13.5 L7.5 20.2Z" fill="#d4d4d4"/><path d="M7.2 14.5 L13 7" stroke="#2e2e2e" stroke-width="1.3" fill="none"/></svg>
<svg style="left:33px;top:510px" width="4" height="4" viewBox="0 0 4 4"><path d="M4 0 V4 H0Z" fill="#9a9a9a"/></svg>
<svg style="left:12.0px;top:525.0px" width="22" height="22" viewBox="0 0 22 22"><path d="M3 9.5 C3 5 8 3.5 12 4.5 C16.5 5.5 20.5 8.5 20 13.5 C19.6 17.5 15.5 18.8 13 17.5 C12 15.8 9.3 15.8 8.3 17.3 C4.5 17.3 3 13.5 3 9.5Z" fill="#d4d4d4"/><circle cx="9.5" cy="10.5" r="2.5" fill="#2e2e2e"/><path d="M2 10 H7" stroke="#d4d4d4" stroke-width="2"/></svg>
<svg style="left:33px;top:542px" width="4" height="4" viewBox="0 0 4 4"><path d="M4 0 V4 H0Z" fill="#9a9a9a"/></svg>
<svg style="left:12.0px;top:556.0px" width="22" height="22" viewBox="0 0 22 22"><path d="M8.5 20 L6.5 12.5 L11.5 5.5 L18 10 L13 17 Z" stroke="#d4d4d4" fill="none" stroke-width="1.5"/><path d="M11.5 5.5 L14 2 L20.5 6.5 L18 10" stroke="#d4d4d4" fill="none" stroke-width="1.5"/><circle cx="11.5" cy="12.5" r="1.5" fill="#d4d4d4"/><path d="M8.5 20 L11.2 13" stroke="#d4d4d4" stroke-width="1.1"/><path d="M3 1 V7 M0 4 H6" stroke="#d4d4d4" stroke-width="1.3"/></svg>
<svg style="left:33px;top:573px" width="4" height="4" viewBox="0 0 4 4"><path d="M4 0 V4 H0Z" fill="#9a9a9a"/></svg>
<svg style="left:12.0px;top:587.0px" width="22" height="22" viewBox="0 0 22 22"><path d="M3.8 3.5 H18.2 V7.3 H17.1 C16.8 5.6 16.3 5.1 14.6 5.1 H12.2 V16.6 C12.2 17.8 12.7 18.1 14.4 18.2 V19.4 H7.6 V18.2 C9.3 18.1 9.8 17.8 9.8 16.6 V5.1 H7.4 C5.7 5.1 5.2 5.6 4.9 7.3 H3.8Z" fill="#d4d4d4"/></svg>
<svg style="left:33px;top:604px" width="4" height="4" viewBox="0 0 4 4"><path d="M4 0 V4 H0Z" fill="#9a9a9a"/></svg>
<svg style="left:12.0px;top:618.0px" width="22" height="22" viewBox="0 0 22 22"><path d="M6 2 V18.5 L10 14.5 L12.8 20.5 L15.3 19.3 L12.5 13.5 H18 Z" fill="#d4d4d4"/></svg>
<svg style="left:33px;top:635px" width="4" height="4" viewBox="0 0 4 4"><path d="M4 0 V4 H0Z" fill="#9a9a9a"/></svg>
<svg style="left:12.0px;top:650.0px" width="22" height="22" viewBox="0 0 22 22"><rect x="3" y="4.7" width="17" height="13" fill="#585858" stroke="#d4d4d4" stroke-width="1.4"/></svg>
<svg style="left:33px;top:667px" width="4" height="4" viewBox="0 0 4 4"><path d="M4 0 V4 H0Z" fill="#9a9a9a"/></svg>
<svg style="left:12.0px;top:681.0px" width="22" height="22" viewBox="0 0 22 22"><path d="M7 20 C5 17 3 14.5 2.3 12.2 C1.8 10.6 3.8 10 4.8 11.6 L6.5 14 V4.5 C6.5 2.8 8.8 2.8 8.8 4.5 V10 V3 C8.8 1.3 11.2 1.3 11.2 3 V10 V3.8 C11.2 2.2 13.6 2.2 13.6 3.8 V10.5 V6 C13.6 4.4 16 4.4 16 6 V14 C16 17 15 18.5 14.3 20Z" fill="#d4d4d4"/><path d="M8.8 5 V10 M11.2 5 V10 M13.6 6 V10.5" stroke="#2e2e2e" stroke-width=".8"/></svg>
<svg style="left:33px;top:698px" width="4" height="4" viewBox="0 0 4 4"><path d="M4 0 V4 H0Z" fill="#9a9a9a"/></svg>
<svg style="left:12.0px;top:712.0px" width="22" height="22" viewBox="0 0 22 22"><circle cx="8.8" cy="8.8" r="6.2" stroke="#d4d4d4" fill="none" stroke-width="1.7"/><path d="M5.5 7 A4 4 0 0 1 10.5 4.8" stroke="#d4d4d4" fill="none" stroke-width="1"/><path d="M13.5 13.5 L19.5 19.5" stroke="#d4d4d4" stroke-width="2.4" stroke-linecap="round"/></svg>
<svg style="left:12.0px;top:743.0px" width="22" height="22" viewBox="0 0 22 22"><circle cx="4" cy="11" r="2" fill="#d4d4d4"/><circle cx="11" cy="11" r="2" fill="#d4d4d4"/><circle cx="18" cy="11" r="2" fill="#d4d4d4"/></svg>
<svg style="left:33px;top:760px" width="4" height="4" viewBox="0 0 4 4"><path d="M4 0 V4 H0Z" fill="#9a9a9a"/></svg>
<svg style="left:5px;top:775px" width="12" height="12" viewBox="0 0 12 12"><rect x="4.5" y="4.5" width="7" height="7" fill="#e6e6e6" stroke="#e6e6e6"/><rect x="0.5" y="0.5" width="7" height="7" fill="#111" stroke="#e6e6e6"/></svg>
<svg style="left:27px;top:775px" width="12" height="12" viewBox="0 0 12 12"><path d="M3 2.5 H9 V9" stroke="#d4d4d4" fill="none" stroke-width="1.5"/><path d="M0 2.5 L3.8 0 V5Z M9 12 L6.5 8.2 H11.5Z" fill="#d4d4d4"/></svg>
<div class="a" style="left:18px;top:807px;width:21px;height:21px;background:#ee5dfa;border:1px solid #e8e8e8"></div>
<div class="a" style="left:5px;top:794px;width:23px;height:23px;background:#ffffff;border:1px solid #2e2e2e"></div>
<svg style="left:12.0px;top:840.0px" width="22" height="22" viewBox="0 0 22 22"><rect x="2" y="4" width="18" height="14" stroke="#d4d4d4" fill="none" stroke-width="1.4"/><circle cx="11" cy="11" r="3.8" stroke="#d4d4d4" fill="none" stroke-width="1.3" stroke-dasharray="1.5 1.3"/></svg>
<svg style="left:12.0px;top:871.0px" width="22" height="22" viewBox="0 0 22 22"><rect x="8" y="3" width="13" height="10" fill="#2e2e2e" stroke="#d4d4d4" stroke-width="1.5"/><path d="M8 3.8 H21" stroke="#d4d4d4" stroke-width="2.4"/><rect x="2" y="8" width="12" height="10" fill="#2e2e2e" stroke="#d4d4d4" stroke-width="1.5"/></svg>
<svg style="left:33px;top:888px" width="4" height="4" viewBox="0 0 4 4"><path d="M4 0 V4 H0Z" fill="#9a9a9a"/></svg>
</div></body></html>
